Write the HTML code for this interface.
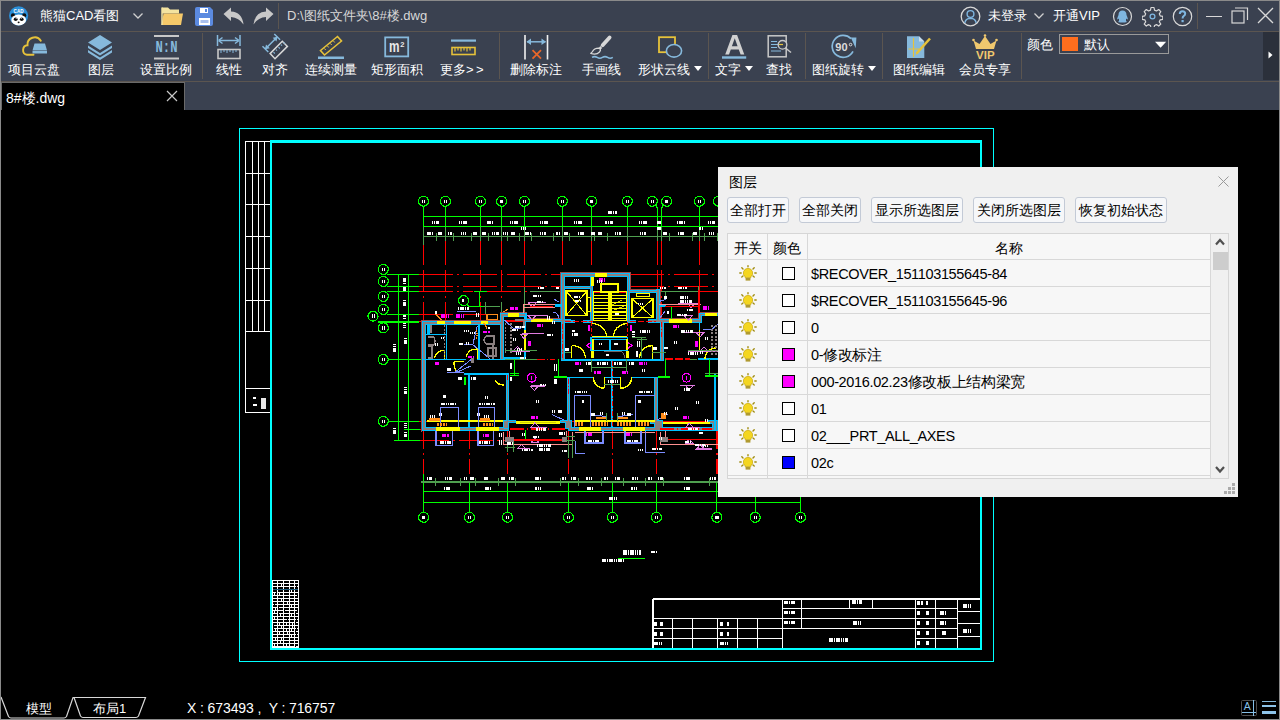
<!DOCTYPE html>
<html><head><meta charset="utf-8">
<style>
*{margin:0;padding:0;box-sizing:border-box}
html,body{width:1280px;height:720px;overflow:hidden;background:#000}
body{position:relative;font-family:"Liberation Sans",sans-serif;color:#fff}
.a{position:absolute}
#title{left:0;top:0;width:1280px;height:32px;background:#3a4150;border-top:1px solid #8a8a8a}
#tb{left:0;top:31px;width:1280px;height:50px;background:#3a4150;border-top:1px solid #5b5550}
#tabbar{left:0;top:81px;width:1280px;height:29px;background:#3a4150;border-top:1px solid #5b5550}
.lbl{position:absolute;top:61px;font-size:13px;line-height:18px;white-space:nowrap;color:#fff}
.sep{position:absolute;top:33px;width:1px;height:46px;background:#5b5550}
.tsep{position:absolute;top:3px;width:1px;height:26px;background:#5b5550}
.tri{position:absolute;width:0;height:0;border-left:4px solid transparent;border-right:4px solid transparent;border-top:5px solid #fff}
#dlg{left:718px;top:167px;width:520px;height:330px;background:#f0f0f0;color:#000;font-size:14px}
.btn{position:absolute;top:30px;height:26px;border:1px solid #c3cad6;border-radius:3px;background:#f6f7f9;font-size:14px;line-height:24px;text-align:center;color:#000}
.row{position:absolute;left:0;width:483px;height:27px;border-bottom:1px solid #d8d8d8}
.cell{position:absolute;top:0;height:27px}
.sq{position:absolute;left:54px;top:7px;width:13px;height:13px;border:1px solid #000;background:#fff}
.nm{position:absolute;left:83px;top:1px;line-height:27px;font-size:14.5px;letter-spacing:-0.35px;color:#000;white-space:nowrap}
</style></head><body>
<!-- TITLE BAR -->
<div id="title" class="a"></div>
<div id="tb" class="a"></div>
<div id="tabbar" class="a"></div>
<!-- title content -->
<svg class="a" style="left:8px;top:5px" width="22" height="22" viewBox="0 0 22 22">
 <circle cx="10.6" cy="10.8" r="9.6" fill="#2c8fd8"/>
 <circle cx="5" cy="10.4" r="2.1" fill="#111"/><circle cx="16.2" cy="10.4" r="2.1" fill="#111"/>
 <ellipse cx="10.7" cy="15" rx="7.4" ry="5.4" fill="#fff"/>
 <ellipse cx="7.7" cy="14.2" rx="1.9" ry="1.8" fill="#111"/>
 <ellipse cx="13.7" cy="14.2" rx="1.9" ry="1.8" fill="#111"/>
 <circle cx="8.2" cy="13.6" r="0.5" fill="#fff"/><circle cx="13.2" cy="13.6" r="0.5" fill="#fff"/>
 <ellipse cx="10.6" cy="17.3" rx="1" ry="0.9" fill="#111"/>
 <text x="10.6" y="7.8" font-size="5" font-weight="bold" fill="#fff" text-anchor="middle" font-family="Liberation Sans" textLength="10" lengthAdjust="spacingAndGlyphs">CAD</text>
</svg>
<div class="a" style="left:40px;top:7px;font-size:13px;line-height:18px;color:#fff">熊猫CAD看图</div>
<svg class="a" style="left:132px;top:12px" width="12" height="8"><path d="M1.5 1.5 L6 6 L10.5 1.5" stroke="#d0d0d0" stroke-width="1.3" fill="none"/></svg>
<svg class="a" style="left:160px;top:6px" width="24" height="20" viewBox="0 0 24 20">
 <path d="M2 1.5 h6 l2 2 h9 v4 h-17z" fill="#f3e3a0"/>
 <path d="M1.5 19 L3.5 7.5 H23 L21 19 Z" fill="#f5c96a"/>
 <path d="M2 1.5 V19" stroke="#f3e3a0" stroke-width="1.5"/>
</svg>
<svg class="a" style="left:195px;top:7px" width="19" height="19" viewBox="0 0 19 19">
 <path d="M0 2 Q0 0 2 0 H15 L18 3 V17 Q18 19 16 19 H2 Q0 19 0 17Z" fill="#5b8ae0"/>
 <rect x="5" y="1" width="8" height="5" fill="#fff"/><rect x="10" y="2" width="2" height="3" fill="#5b8ae0"/>
 <rect x="4" y="11" width="11" height="7" fill="#fff"/><rect x="5.5" y="13" width="8" height="3" fill="#a9c0ee"/>
</svg>
<svg class="a" style="left:223px;top:7px" width="22" height="18" viewBox="0 0 22 18">
 <path d="M0.5 7 L8 0.5 V4.5 Q19 5 20.5 17.5 Q16 10.5 8 10 V14 Z" fill="#c8c8c8"/>
</svg>
<svg class="a" style="left:252px;top:7px" width="22" height="18" viewBox="0 0 22 18">
 <path d="M21.5 7 L14 0.5 V4.5 Q3 5 1.5 17.5 Q6 10.5 14 10 V14 Z" fill="#c8c8c8"/>
</svg>
<div class="tsep" style="left:278px"></div>
<div class="a" style="left:287px;top:7px;font-size:13px;line-height:18px;color:#d8d8d8">D:\图纸文件夹\8#楼.dwg</div>

<svg class="a" style="left:960px;top:6px" width="21" height="21" viewBox="0 0 21 21">
 <circle cx="10.5" cy="10.5" r="9.3" stroke="#d8d8d8" stroke-width="1.3" fill="none"/>
 <circle cx="10.5" cy="8" r="3.4" stroke="#7fb6e0" stroke-width="1.4" fill="none"/>
 <path d="M4.8 17 Q5.5 12.5 10.5 12.3 Q15.5 12.5 16.2 17" stroke="#7fb6e0" stroke-width="1.4" fill="none"/>
</svg>
<div class="a" style="left:988px;top:7px;font-size:13px;line-height:18px">未登录</div>
<svg class="a" style="left:1033px;top:12px" width="12" height="8"><path d="M1.5 1.5 L6 6 L10.5 1.5" stroke="#d0d0d0" stroke-width="1.3" fill="none"/></svg>
<div class="a" style="left:1053px;top:7px;font-size:13px;line-height:18px">开通VIP</div>
<svg class="a" style="left:1112px;top:6px" width="21" height="21" viewBox="0 0 21 21">
 <circle cx="10.5" cy="10.5" r="9" stroke="#d8d8d8" stroke-width="1.2" fill="none"/>
 <path d="M10.5 4.5 Q14.5 4.5 14.5 9 Q15.5 11 16 13.5 Q14.5 13 14 12.5 Q13.5 15 15 16 Q10.5 17 6 16 Q7.5 15 7 12.5 Q6.5 13 5 13.5 Q5.5 11 6.5 9 Q6.5 4.5 10.5 4.5Z" fill="#7fb6e0"/>
</svg>
<svg class="a" style="left:1142px;top:6px" width="21" height="21" viewBox="0 0 21 21">
 <path d="M9 1.5 h3 l0.5 2.6 l2 0.9 l2.2-1.5 l2.1 2.1 l-1.5 2.2 l0.9 2 l2.6 0.5 v3 l-2.6 0.5 l-0.9 2 l1.5 2.2 l-2.1 2.1 l-2.2-1.5 l-2 0.9 l-0.5 2.6 h-3 l-0.5-2.6 l-2-0.9 l-2.2 1.5 l-2.1-2.1 l1.5-2.2 l-0.9-2 l-2.6-0.5 v-3 l2.6-0.5 l0.9-2 l-1.5-2.2 l2.1-2.1 l2.2 1.5 l2-0.9z" stroke="#d8d8d8" stroke-width="1.2" fill="none" stroke-linejoin="round"/>
 <circle cx="10.5" cy="10.5" r="2.4" stroke="#7fb6e0" stroke-width="1.3" fill="none"/>
</svg>
<svg class="a" style="left:1172px;top:6px" width="21" height="21" viewBox="0 0 21 21">
 <circle cx="10.5" cy="10.5" r="9.2" stroke="#d8d8d8" stroke-width="1.2" fill="none"/>
 <path d="M7.8 8 Q7.8 5.3 10.5 5.3 Q13.2 5.3 13.2 7.8 Q13.2 9.3 11.6 10.2 Q10.6 10.8 10.6 12.5" stroke="#7fb6e0" stroke-width="2" fill="none"/>
 <rect x="9.5" y="14" width="2.2" height="2.2" fill="#7fb6e0"/>
</svg>
<div class="tsep" style="left:1197px"></div>
<div class="a" style="left:1206px;top:16px;width:16px;height:1px;background:#d8d8d8"></div>
<svg class="a" style="left:1231px;top:7px" width="18" height="17" viewBox="0 0 18 17">
 <rect x="1" y="4" width="12" height="12" stroke="#d8d8d8" stroke-width="1.2" fill="none"/>
 <path d="M4 1 H16.5 V13" stroke="#d8d8d8" stroke-width="1.2" fill="none"/>
</svg>
<svg class="a" style="left:1257px;top:7px" width="17" height="17" viewBox="0 0 17 17">
 <path d="M1 1 L16 16 M16 1 L1 16" stroke="#d8d8d8" stroke-width="1.3"/>
</svg>

<!-- TOOLBAR -->
<svg class="a" style="left:0;top:31px" width="1280" height="50" viewBox="0 31 1280 50">
 <!-- cloud disk -->
 <path d="M33.5 54.8 H27 A4.8 4.8 0 0 1 27.5 45.3 A7.2 7.2 0 0 1 40.8 40.8" stroke="#e6c23a" stroke-width="1.9" fill="none" stroke-linecap="round"/>
 <path d="M34.5 43.5 H45 L47 50.5 H32.5Z" fill="#86b9dc"/>
 <rect x="32.5" y="51" width="14.5" height="2.5" fill="#86b9dc"/>
 <!-- layers -->
 <path d="M100 35 L112 42.5 L100 50 L88 42.5Z" fill="#86b9dc"/>
 <path d="M88 45.5 L100 53 L112 45.5 L112 48 L100 55.5 L88 48Z" fill="#86b9dc"/>
 <path d="M88 50 L100 57.5 L112 50 L112 52.5 L100 60 L88 52.5Z" fill="#86b9dc"/>
 <!-- N:N -->
 <rect x="154" y="35" width="25" height="2" fill="#c8c8c8"/>
 <rect x="154" y="57.5" width="25" height="2" fill="#c8c8c8"/>
 <text x="166.5" y="52.2" font-family="Liberation Mono" font-size="16" font-weight="bold" fill="#86b9dc" text-anchor="middle" textLength="22" lengthAdjust="spacingAndGlyphs">N:N</text>
 <!-- linear -->
 <path d="M217.5 35 V46 M240 35 V46 M219 40.5 H238.5" stroke="#86b9dc" stroke-width="1.5" fill="none"/>
 <path d="M218.5 40.5 L222.5 37.5 M218.5 40.5 L222.5 43.5 M239 40.5 L235 37.5 M239 40.5 L235 43.5" stroke="#86b9dc" stroke-width="1.5" fill="none"/>
 <rect x="218" y="49.5" width="22" height="9" stroke="#c8c8c8" stroke-width="1.6" fill="none"/>
 <path d="M221 50 v3 M224 50 v2 M227 50 v3 M230 50 v2 M233 50 v3 M236 50 v2" stroke="#86b9dc" stroke-width="1"/>
 <!-- align -->
 <path d="M265.5 48.8 L277 37.2 M262.5 46.2 L268.3 52 M274.3 34 L280.1 39.8" stroke="#86b9dc" stroke-width="1.5" fill="none"/>
 <path d="M265 49.3 L266 44.5 L269.8 48.3Z M277.5 36.7 L276.5 41.5 L272.7 37.7Z" fill="#86b9dc"/>
 <path d="M270.1 53.6 L282.3 41.3 L287.4 46.4 L275 58.7 Z" stroke="#d8d8d8" stroke-width="1.5" fill="none"/>
 <path d="M273.5 52.2 l1.3 1.3 M276 49.7 l1 1 M278.5 47.2 l1.3 1.3 M281 44.7 l1 1 M283.5 42.4 l1.3 1.3" stroke="#86b9dc" stroke-width="1.1"/>
 <!-- continuous measure -->
 <path d="M320.5 50.5 L337.5 36.5 L341.5 41 L324.5 55Z" stroke="#e6c23a" stroke-width="1.6" fill="none"/>
 <path d="M324.5 48.5 l1.2 1.5 M327.5 46 l1.2 1.5 M330.5 43.5 l1.2 1.5 M333.5 41 l1.2 1.5" stroke="#e6c23a" stroke-width="1"/>
 <rect x="318" y="56.5" width="26" height="2.5" fill="#86b9dc"/>
 <!-- area -->
 <rect x="385.2" y="37.4" width="23" height="19" stroke="#86b9dc" stroke-width="1.8" fill="none"/>
 <text x="389" y="52" font-family="Liberation Sans" font-size="16" font-weight="bold" fill="#e8e8e8" textLength="10.5" lengthAdjust="spacingAndGlyphs">m</text>
 <text x="402.3" y="46.5" font-family="Liberation Sans" font-size="7.5" font-weight="bold" fill="#e8e8e8" text-anchor="middle">2</text>
 <!-- more -->
 <rect x="451" y="39.5" width="25" height="2.2" fill="#86b9dc"/>
 <rect x="452" y="47.5" width="23" height="7" stroke="#e6c23a" stroke-width="1.6" fill="none"/>
 <path d="M455 48 v3.5 M458 48 v2.5 M461 48 v3.5 M464 48 v2.5 M467 48 v3.5 M470 48 v2.5" stroke="#e6c23a" stroke-width="1.2"/>
 <!-- delete dim -->
 <path d="M525 35 V59.5 M547.5 35 V59.5" stroke="#f0f0f0" stroke-width="1.6"/>
 <path d="M527 41.8 H545.5" stroke="#86b9dc" stroke-width="1.5"/>
 <path d="M526.5 41.8 L531 38.5 V45Z M546 41.8 L541.5 38.5 V45Z" fill="#86b9dc"/>
 <path d="M532.5 50.2 L541 58.6 M541 50.2 L532.5 58.6" stroke="#e8662a" stroke-width="1.8"/>
 <!-- freehand -->
 <path d="M602.6 45.2 L609.6 37.4" stroke="#d8d8d8" stroke-width="3.8" stroke-linecap="round"/>
 <path d="M599.5 47 L601.3 48.8" stroke="#d8d8d8" stroke-width="2.6"/>
 <path d="M598.8 48.2 Q594 48.5 592.5 51.5 Q591.5 53 590.8 53.4 Q596.5 55.2 599.5 52 Q601 50.3 600.2 49Z" stroke="#d8d8d8" stroke-width="1.3" fill="none" stroke-linejoin="round"/>
 <path d="M592 57.4 q2.6 -1.6 5.2 0 t5.2 0 t5.2 0 t5.2 0" stroke="#86b9dc" stroke-width="1.6" fill="none"/>
 <!-- shape cloud -->
 <rect x="659" y="37.2" width="16" height="15" stroke="#e6c23a" stroke-width="1.8" fill="none"/>
 <ellipse cx="674" cy="50.8" rx="7.6" ry="6.3" stroke="#86b9dc" stroke-width="1.6" fill="#3a4150"/>
 <!-- text A -->
 <path d="M725.2 54.6 L732.4 35 H737.1 L744.3 54.6 H740.6 L738.8 49.4 H730.8 L729 54.6 Z M731.9 46.2 H737.6 L734.75 38.2 Z" fill="#d0d0d0" fill-rule="evenodd"/>
 <rect x="722" y="56.3" width="24.2" height="2.4" fill="#86b9dc"/>
 <!-- find -->
 <rect x="768.2" y="35.8" width="18" height="21" stroke="#c8c8c8" stroke-width="1.5" fill="#3a4150"/>
 <path d="M771 41.5 h6 M771 44.5 h8 M771 47.5 h6 M771 51 h10" stroke="#86b9dc" stroke-width="1"/>
 <circle cx="782.5" cy="44.8" r="4.3" stroke="#c8c8c8" stroke-width="1.4" fill="#3a4150"/>
 <path d="M779 44.5 h4" stroke="#e6c23a" stroke-width="1.2"/>
 <path d="M785.5 48 L791 52.5" stroke="#c8c8c8" stroke-width="1.5"/>
 <!-- rotate 90 -->
 <path d="M853 51.4 A11 11 0 1 1 851 38.6" stroke="#86b9dc" stroke-width="1.7" fill="none"/>
 <path d="M850.8 37.4 L856.4 37.4 L855.7 48.3 Z" fill="#86b9dc"/>
 <text x="835.3" y="51" font-family="Liberation Sans" font-size="11" font-weight="bold" fill="#dcdcdc" textLength="12.3" lengthAdjust="spacingAndGlyphs">90</text>
 <circle cx="850.6" cy="44.6" r="1.3" stroke="#dcdcdc" stroke-width="1" fill="none"/>
 <!-- edit drawing -->
 <path d="M907 36.3 H919 L924.3 41.5 V58.1 H907Z" fill="#86b9dc"/>
 <path d="M919 36.3 V41.5 H924.3" fill="#c8dcea"/>
 <path d="M913.5 38 V57 M908.5 49 H919" stroke="#e6c23a" stroke-width="1.2"/>
 <path d="M916.5 53.5 L930 38.5" stroke="#e6c23a" stroke-width="2.6"/>
 <path d="M915.5 55 L916.8 52 L918.3 53.4Z" fill="#e6c23a"/>
 <!-- vip -->
 <path d="M973.5 40.5 L979.5 44 L985 36 L990.5 44 L996.5 40.5 L994 49 H976Z" fill="#f0c86e"/>
 <circle cx="973.5" cy="40" r="1.3" fill="#f0c86e"/><circle cx="996.5" cy="40" r="1.3" fill="#f0c86e"/><circle cx="985" cy="35.5" r="1.3" fill="#f0c86e"/>
 <text x="985.3" y="59" font-family="Liberation Sans" font-size="11.5" font-weight="bold" fill="#f0c86e" text-anchor="middle">VIP</text>
 <!-- color box -->
 <rect x="1059.5" y="34.5" width="109" height="19" stroke="#9a9a9a" stroke-width="1" fill="none"/>
 <rect x="1062" y="37" width="16" height="14" fill="#ff6e1e"/>
 <path d="M1155 41.7 H1166.2 L1160.6 47.8Z" fill="#fff"/>
 <!-- right strip -->
 <rect x="1263" y="32" width="16" height="48" fill="#2b303b"/>
 <path d="M1268.5 51.5 L1272.5 55 L1268.5 58.5Z" fill="#fff"/>
</svg>
<div class="lbl" style="left:8px">项目云盘</div>
<div class="lbl" style="left:88px">图层</div>
<div class="lbl" style="left:140px">设置比例</div>
<div class="sep" style="left:202px"></div>
<div class="lbl" style="left:216px">线性</div>
<div class="lbl" style="left:262px">对齐</div>
<div class="lbl" style="left:305px">连续测量</div>
<div class="lbl" style="left:371px">矩形面积</div>
<div class="lbl" style="left:440px">更多<span style="letter-spacing:2.5px">&gt;&gt;</span></div>
<div class="sep" style="left:499px"></div>
<div class="lbl" style="left:510px">删除标注</div>
<div class="lbl" style="left:582px">手画线</div>
<div class="lbl" style="left:638px">形状云线</div>
<div class="tri" style="left:694px;top:66px"></div>
<div class="sep" style="left:708px"></div>
<div class="lbl" style="left:715px">文字</div>
<div class="tri" style="left:745px;top:66px"></div>
<div class="lbl" style="left:766px">查找</div>
<div class="sep" style="left:805px"></div>
<div class="lbl" style="left:812px">图纸旋转</div>
<div class="tri" style="left:868px;top:66px"></div>
<div class="sep" style="left:882px"></div>
<div class="lbl" style="left:893px">图纸编辑</div>
<div class="lbl" style="left:959px">会员专享</div>
<div class="sep" style="left:1021px"></div>
<div class="a" style="left:1027px;top:36px;font-size:13px;line-height:18px">颜色</div>
<div class="a" style="left:1084px;top:36px;font-size:13px;line-height:18px">默认</div>
<!-- TAB -->
<div class="a" style="left:1px;top:82px;width:184px;height:28px;background:#000;border-right:1px solid #6a6a6a;border-top:1px solid #6a6a6a;border-left:1px solid #6a6a6a"></div>
<div class="a" style="left:6px;top:89px;font-size:14px;line-height:18px;color:#fff">8#楼.dwg</div>
<svg class="a" style="left:166px;top:90px" width="12" height="12"><path d="M1 1 L11 11 M11 1 L1 11" stroke="#c8c8c8" stroke-width="1.2"/></svg>

<!-- DRAWING -->
<svg id="dwg" class="a" style="left:0;top:110px" width="1280" height="610" viewBox="0 110 1280 610" shape-rendering="crispEdges">
<g id="frames" fill="none" stroke="#00ffff">
 <rect x="239.5" y="128.5" width="754" height="533" stroke-width="1"/>
 <path d="M271 143 V649 M981 141 V649 M270 141.5 H982 M270 649 H982" stroke-width="2"/>
 <path d="M270 141.5 H982" stroke-width="3"/>
</g>
<!--DWG-->
<line x1="423.5" y1="240.8" x2="423.5" y2="264.7" stroke="#ff0000" stroke-width="1.5" />
<line x1="445.4" y1="240.8" x2="445.4" y2="264.7" stroke="#ff0000" stroke-width="1.5" />
<line x1="480.4" y1="240.8" x2="480.4" y2="264.7" stroke="#ff0000" stroke-width="1.5" />
<line x1="501.6" y1="240.8" x2="501.6" y2="264.7" stroke="#ff0000" stroke-width="1.5" />
<line x1="524.4" y1="240.8" x2="524.4" y2="264.7" stroke="#ff0000" stroke-width="1.5" />
<line x1="562.3" y1="240.8" x2="562.3" y2="264.7" stroke="#ff0000" stroke-width="1.5" />
<line x1="591.6" y1="240.8" x2="591.6" y2="264.7" stroke="#ff0000" stroke-width="1.5" />
<line x1="627.3" y1="240.8" x2="627.3" y2="264.7" stroke="#ff0000" stroke-width="1.5" />
<line x1="657.5" y1="240.8" x2="657.5" y2="264.7" stroke="#ff0000" stroke-width="1.5" />
<line x1="661.5" y1="240.8" x2="661.5" y2="264.7" stroke="#ff0000" stroke-width="1.5" />
<line x1="699.4" y1="240.8" x2="699.4" y2="264.7" stroke="#ff0000" stroke-width="1.5" />
<line x1="423.6" y1="431" x2="423.6" y2="474" stroke="#ff0000" stroke-width="1.5" stroke-dasharray="18 4 2 4"/>
<line x1="469.4" y1="431" x2="469.4" y2="474" stroke="#ff0000" stroke-width="1.5" stroke-dasharray="18 4 2 4"/>
<line x1="507.5" y1="431" x2="507.5" y2="474" stroke="#ff0000" stroke-width="1.5" stroke-dasharray="18 4 2 4"/>
<line x1="568.4" y1="431" x2="568.4" y2="474" stroke="#ff0000" stroke-width="1.5" stroke-dasharray="18 4 2 4"/>
<line x1="612.4" y1="431" x2="612.4" y2="474" stroke="#ff0000" stroke-width="1.5" stroke-dasharray="18 4 2 4"/>
<line x1="656.4" y1="431" x2="656.4" y2="474" stroke="#ff0000" stroke-width="1.5" stroke-dasharray="18 4 2 4"/>
<line x1="716.8" y1="431" x2="716.8" y2="474" stroke="#ff0000" stroke-width="1.5" stroke-dasharray="18 4 2 4"/>
<line x1="423.5" y1="270.3" x2="423.5" y2="321" stroke="#ff0000" stroke-width="1.5" stroke-dasharray="22 4 1.5 4"/>
<line x1="445.4" y1="270.3" x2="445.4" y2="321" stroke="#ff0000" stroke-width="1.5" stroke-dasharray="22 4 1.5 4"/>
<line x1="480.4" y1="270.3" x2="480.4" y2="321" stroke="#ff0000" stroke-width="1.5" stroke-dasharray="22 4 1.5 4"/>
<line x1="501.6" y1="270.3" x2="501.6" y2="321" stroke="#ff0000" stroke-width="1.5" stroke-dasharray="22 4 1.5 4"/>
<line x1="524.4" y1="270.3" x2="524.4" y2="321" stroke="#ff0000" stroke-width="1.5" stroke-dasharray="22 4 1.5 4"/>
<line x1="657.5" y1="270.3" x2="657.5" y2="318" stroke="#ff0000" stroke-width="1.5" stroke-dasharray="22 4 1.5 4"/>
<line x1="661.5" y1="270.3" x2="661.5" y2="318" stroke="#ff0000" stroke-width="1.5" stroke-dasharray="22 4 1.5 4"/>
<line x1="699.4" y1="270.3" x2="699.4" y2="318" stroke="#ff0000" stroke-width="1.5" stroke-dasharray="22 4 1.5 4"/>
<line x1="419" y1="274.5" x2="560" y2="274.5" stroke="#ff0000" stroke-width="1.5" stroke-dasharray="34 4 2 4"/>
<line x1="630" y1="274.5" x2="718" y2="274.5" stroke="#ff0000" stroke-width="1.5" stroke-dasharray="34 4 2 4"/>
<line x1="419" y1="286.5" x2="560" y2="286.5" stroke="#ff0000" stroke-width="1.5" stroke-dasharray="34 4 2 4"/>
<line x1="630" y1="286.5" x2="718" y2="286.5" stroke="#ff0000" stroke-width="1.5" stroke-dasharray="34 4 2 4"/>
<line x1="419" y1="291.5" x2="473" y2="291.5" stroke="#ff0000" stroke-width="1.5" stroke-dasharray="34 4 2 4"/>
<line x1="487" y1="291.5" x2="530" y2="291.5" stroke="#ff0000" stroke-width="1.5" stroke-dasharray="34 4 2 4"/>
<line x1="700" y1="291.5" x2="718" y2="291.5" stroke="#ff0000" stroke-width="1.5" stroke-dasharray="34 4 2 4"/>
<line x1="530" y1="291.3" x2="560" y2="291.3" stroke="#4f9f4f" stroke-width="1.2" />
<line x1="657.5" y1="291.3" x2="698.75" y2="291.3" stroke="#4f9f4f" stroke-width="1.2" />
<line x1="665.6" y1="291" x2="665.6" y2="296" stroke="#4f9f4f" stroke-width="1" />
<line x1="698.75" y1="286" x2="698.75" y2="318" stroke="#4f9f4f" stroke-width="1" />
<line x1="419" y1="321.7" x2="421" y2="321.7" stroke="#ff0000" stroke-width="1.5" />
<line x1="419" y1="314.4" x2="500" y2="314.4" stroke="#ff0000" stroke-width="1.5" stroke-dasharray="34 4 2 4"/>
<line x1="419" y1="359.5" x2="423" y2="359.5" stroke="#ff0000" stroke-width="1.5" />
<line x1="419" y1="421.3" x2="718" y2="421.3" stroke="#ff0000" stroke-width="1.2" />
<line x1="419" y1="429.5" x2="425" y2="429.5" stroke="#ff0000" stroke-width="1.5" />
<line x1="415" y1="440.5" x2="505" y2="440.5" stroke="#ff0000" stroke-width="1.5" stroke-dasharray="34 4 2 4"/>
<circle cx="423.5" cy="201.3" r="5" stroke="#00ff00" stroke-width="1.2" fill="none"/>
<line x1="423.5" y1="206.3" x2="423.5" y2="226.6" stroke="#00ff00" stroke-width="1.2" />
<line x1="423.5" y1="226.6" x2="423.5" y2="240.8" stroke="#4f9f4f" stroke-width="1.2" />
<circle cx="445.4" cy="201.3" r="5" stroke="#00ff00" stroke-width="1.2" fill="none"/>
<line x1="445.4" y1="206.3" x2="445.4" y2="226.6" stroke="#00ff00" stroke-width="1.2" />
<line x1="445.4" y1="226.6" x2="445.4" y2="240.8" stroke="#4f9f4f" stroke-width="1.2" />
<circle cx="480.4" cy="201.3" r="5" stroke="#00ff00" stroke-width="1.2" fill="none"/>
<line x1="480.4" y1="206.3" x2="480.4" y2="226.6" stroke="#00ff00" stroke-width="1.2" />
<line x1="480.4" y1="226.6" x2="480.4" y2="240.8" stroke="#4f9f4f" stroke-width="1.2" />
<circle cx="501.6" cy="201.3" r="5" stroke="#00ff00" stroke-width="1.2" fill="none"/>
<line x1="501.6" y1="206.3" x2="501.6" y2="226.6" stroke="#00ff00" stroke-width="1.2" />
<line x1="501.6" y1="226.6" x2="501.6" y2="240.8" stroke="#4f9f4f" stroke-width="1.2" />
<circle cx="524.4" cy="201.3" r="5" stroke="#00ff00" stroke-width="1.2" fill="none"/>
<line x1="524.4" y1="206.3" x2="524.4" y2="226.6" stroke="#00ff00" stroke-width="1.2" />
<line x1="524.4" y1="226.6" x2="524.4" y2="240.8" stroke="#4f9f4f" stroke-width="1.2" />
<circle cx="562.3" cy="201.3" r="5" stroke="#00ff00" stroke-width="1.2" fill="none"/>
<line x1="562.3" y1="206.3" x2="562.3" y2="226.6" stroke="#00ff00" stroke-width="1.2" />
<line x1="562.3" y1="226.6" x2="562.3" y2="240.8" stroke="#4f9f4f" stroke-width="1.2" />
<circle cx="591.6" cy="201.3" r="5" stroke="#00ff00" stroke-width="1.2" fill="none"/>
<line x1="591.6" y1="206.3" x2="591.6" y2="226.6" stroke="#00ff00" stroke-width="1.2" />
<line x1="591.6" y1="226.6" x2="591.6" y2="240.8" stroke="#4f9f4f" stroke-width="1.2" />
<circle cx="627.3" cy="201.3" r="5" stroke="#00ff00" stroke-width="1.2" fill="none"/>
<line x1="627.3" y1="206.3" x2="627.3" y2="226.6" stroke="#00ff00" stroke-width="1.2" />
<line x1="627.3" y1="226.6" x2="627.3" y2="240.8" stroke="#4f9f4f" stroke-width="1.2" />
<circle cx="652.3" cy="201.3" r="5" stroke="#00ff00" stroke-width="1.2" fill="none"/>
<circle cx="666.6" cy="201.3" r="5" stroke="#00ff00" stroke-width="1.2" fill="none"/>
<circle cx="699.4" cy="201.3" r="5" stroke="#00ff00" stroke-width="1.2" fill="none"/>
<path d="M655.5 205 L657.5 208 V226.6" stroke="#00ff00" stroke-width="1.2" fill="none" />
<path d="M663.5 205 L661.5 208 V226.6" stroke="#00ff00" stroke-width="1.2" fill="none" />
<line x1="657.5" y1="226.6" x2="657.5" y2="240.8" stroke="#4f9f4f" stroke-width="1.2" />
<line x1="661.5" y1="226.6" x2="661.5" y2="240.8" stroke="#4f9f4f" stroke-width="1.2" />
<line x1="699.4" y1="206.3" x2="699.4" y2="226.6" stroke="#00ff00" stroke-width="1.2" />
<line x1="699.4" y1="226.6" x2="699.4" y2="240.8" stroke="#4f9f4f" stroke-width="1.2" />
<circle cx="718.5" cy="201.3" r="5" stroke="#00ff00" stroke-width="1.2" fill="none"/>
<line x1="423.5" y1="216.5" x2="718" y2="216.5" stroke="#00ff00" stroke-width="1.2" />
<line x1="423.5" y1="226.6" x2="718" y2="226.6" stroke="#00ff00" stroke-width="1.2" />
<line x1="423.5" y1="236.5" x2="718" y2="236.5" stroke="#4f9f4f" stroke-width="1.2" />
<line x1="423.5" y1="226.6" x2="423.5" y2="245" stroke="#4f9f4f" stroke-width="1.2" />
<line x1="423.5" y1="245" x2="423.5" y2="264.7" stroke="#ff0000" stroke-width="1.5" />
<line x1="436.5" y1="232.5" x2="436.5" y2="240.5" stroke="#4f9f4f" stroke-width="1" />
<line x1="453.4" y1="232.5" x2="453.4" y2="240.5" stroke="#4f9f4f" stroke-width="1" />
<line x1="471.25" y1="232.5" x2="471.25" y2="240.5" stroke="#4f9f4f" stroke-width="1" />
<line x1="488.5" y1="232.5" x2="488.5" y2="240.5" stroke="#4f9f4f" stroke-width="1" />
<line x1="507.25" y1="232.5" x2="507.25" y2="240.5" stroke="#4f9f4f" stroke-width="1" />
<line x1="519.4" y1="232.5" x2="519.4" y2="240.5" stroke="#4f9f4f" stroke-width="1" />
<line x1="531.25" y1="232.5" x2="531.25" y2="240.5" stroke="#4f9f4f" stroke-width="1" />
<line x1="553.4" y1="232.5" x2="553.4" y2="240.5" stroke="#4f9f4f" stroke-width="1" />
<line x1="569.4" y1="232.5" x2="569.4" y2="240.5" stroke="#4f9f4f" stroke-width="1" />
<line x1="594.4" y1="232.5" x2="594.4" y2="240.5" stroke="#4f9f4f" stroke-width="1" />
<line x1="607.5" y1="232.5" x2="607.5" y2="240.5" stroke="#4f9f4f" stroke-width="1" />
<line x1="669.75" y1="232.5" x2="669.75" y2="240.5" stroke="#4f9f4f" stroke-width="1" />
<line x1="692.5" y1="232.5" x2="692.5" y2="240.5" stroke="#4f9f4f" stroke-width="1" />
<line x1="704.4" y1="232.5" x2="704.4" y2="240.5" stroke="#4f9f4f" stroke-width="1" />
<line x1="717" y1="232.5" x2="717" y2="240.5" stroke="#4f9f4f" stroke-width="1" />
<circle cx="423.6" cy="517.3" r="5" stroke="#00ff00" stroke-width="1.2" fill="none"/>
<line x1="423.6" y1="481" x2="423.6" y2="512.3" stroke="#00ff00" stroke-width="1.2" />
<circle cx="469.4" cy="517.3" r="5" stroke="#00ff00" stroke-width="1.2" fill="none"/>
<line x1="469.4" y1="481" x2="469.4" y2="512.3" stroke="#00ff00" stroke-width="1.2" />
<circle cx="507.5" cy="517.3" r="5" stroke="#00ff00" stroke-width="1.2" fill="none"/>
<line x1="507.5" y1="481" x2="507.5" y2="512.3" stroke="#00ff00" stroke-width="1.2" />
<circle cx="568.4" cy="517.3" r="5" stroke="#00ff00" stroke-width="1.2" fill="none"/>
<line x1="568.4" y1="481" x2="568.4" y2="512.3" stroke="#00ff00" stroke-width="1.2" />
<circle cx="612.4" cy="517.3" r="5" stroke="#00ff00" stroke-width="1.2" fill="none"/>
<line x1="612.4" y1="481" x2="612.4" y2="512.3" stroke="#00ff00" stroke-width="1.2" />
<circle cx="656.4" cy="517.3" r="5" stroke="#00ff00" stroke-width="1.2" fill="none"/>
<line x1="656.4" y1="481" x2="656.4" y2="512.3" stroke="#00ff00" stroke-width="1.2" />
<circle cx="716.8" cy="517.3" r="5" stroke="#00ff00" stroke-width="1.2" fill="none"/>
<line x1="716.8" y1="481" x2="716.8" y2="512.3" stroke="#00ff00" stroke-width="1.2" />
<line x1="423.6" y1="474" x2="423.6" y2="512" stroke="#00ff00" stroke-width="1.2" />
<circle cx="755.2" cy="517.3" r="5" stroke="#00ff00" stroke-width="1.2" fill="none"/>
<circle cx="800.5" cy="517.3" r="5" stroke="#00ff00" stroke-width="1.2" fill="none"/>
<line x1="423.6" y1="491.7" x2="718" y2="491.7" stroke="#00ff00" stroke-width="1.2" />
<line x1="423.6" y1="502.2" x2="800.5" y2="502.2" stroke="#00ff00" stroke-width="1.2" />
<line x1="755.2" y1="496" x2="755.2" y2="512" stroke="#00ff00" stroke-width="1.2" />
<line x1="800.5" y1="496" x2="800.5" y2="512" stroke="#00ff00" stroke-width="1.2" />
<line x1="421" y1="481.9" x2="718" y2="481.9" stroke="#4f9f4f" stroke-width="1.2" />
<line x1="435.3" y1="477.5" x2="435.3" y2="485.5" stroke="#4f9f4f" stroke-width="1" />
<line x1="460.3" y1="477.5" x2="460.3" y2="485.5" stroke="#4f9f4f" stroke-width="1" />
<line x1="475.3" y1="477.5" x2="475.3" y2="485.5" stroke="#4f9f4f" stroke-width="1" />
<line x1="498.3" y1="477.5" x2="498.3" y2="485.5" stroke="#4f9f4f" stroke-width="1" />
<line x1="515.5" y1="477.5" x2="515.5" y2="485.5" stroke="#4f9f4f" stroke-width="1" />
<line x1="560.3" y1="477.5" x2="560.3" y2="485.5" stroke="#4f9f4f" stroke-width="1" />
<line x1="578.4" y1="477.5" x2="578.4" y2="485.5" stroke="#4f9f4f" stroke-width="1" />
<line x1="601.4" y1="477.5" x2="601.4" y2="485.5" stroke="#4f9f4f" stroke-width="1" />
<line x1="623.2" y1="477.5" x2="623.2" y2="485.5" stroke="#4f9f4f" stroke-width="1" />
<line x1="645.5" y1="477.5" x2="645.5" y2="485.5" stroke="#4f9f4f" stroke-width="1" />
<line x1="663.6" y1="477.5" x2="663.6" y2="485.5" stroke="#4f9f4f" stroke-width="1" />
<line x1="709.1" y1="477.5" x2="709.1" y2="485.5" stroke="#4f9f4f" stroke-width="1" />
<circle cx="383.3" cy="269.4" r="5" stroke="#00ff00" stroke-width="1.2" fill="none"/>
<circle cx="383.3" cy="281.4" r="5" stroke="#00ff00" stroke-width="1.2" fill="none"/>
<circle cx="383.3" cy="296.4" r="5" stroke="#00ff00" stroke-width="1.2" fill="none"/>
<circle cx="383.3" cy="309.4" r="5" stroke="#00ff00" stroke-width="1.2" fill="none"/>
<circle cx="373" cy="316.1" r="5" stroke="#00ff00" stroke-width="1.2" fill="none"/>
<circle cx="383.3" cy="327.8" r="5" stroke="#00ff00" stroke-width="1.2" fill="none"/>
<circle cx="383.3" cy="359.5" r="5" stroke="#00ff00" stroke-width="1.2" fill="none"/>
<circle cx="383.3" cy="421.3" r="5" stroke="#00ff00" stroke-width="1.2" fill="none"/>
<line x1="387" y1="274.7" x2="419" y2="274.7" stroke="#00ff00" stroke-width="1.2" />
<line x1="387" y1="286.4" x2="419" y2="286.4" stroke="#00ff00" stroke-width="1.2" />
<line x1="387" y1="291.3" x2="419" y2="291.3" stroke="#00ff00" stroke-width="1.2" />
<line x1="387" y1="314.4" x2="419" y2="314.4" stroke="#00ff00" stroke-width="1.2" />
<line x1="378" y1="321.7" x2="419" y2="321.7" stroke="#00ff00" stroke-width="2" />
<line x1="388.3" y1="359.5" x2="421" y2="359.5" stroke="#00ff00" stroke-width="1.2" />
<line x1="388.3" y1="421.3" x2="419" y2="421.3" stroke="#00ff00" stroke-width="1.2" />
<line x1="404" y1="429.5" x2="420" y2="429.5" stroke="#00ff00" stroke-width="1.2" />
<line x1="394" y1="440.3" x2="420" y2="440.3" stroke="#00ff00" stroke-width="1.2" />
<line x1="398.7" y1="274.7" x2="398.7" y2="441" stroke="#00ff00" stroke-width="1.2" />
<line x1="408.3" y1="274.7" x2="408.3" y2="441" stroke="#00ff00" stroke-width="1.2" />
<circle cx="463.7" cy="300.6" r="5" stroke="#00ff00" stroke-width="1.2" fill="none"/>
<path d="M467 304.5 L469 306.5 H484" stroke="#00ff00" stroke-width="1.2" fill="none" />
<line x1="474" y1="291.5" x2="487" y2="291.5" stroke="#00ff00" stroke-width="1.2" />
<line x1="479.5" y1="291.5" x2="479.5" y2="306.5" stroke="#00ff00" stroke-width="1.2" />
<line x1="484" y1="306.5" x2="500" y2="306.5" stroke="#4f9f4f" stroke-width="1.2" />
<line x1="485" y1="302" x2="485" y2="314" stroke="#4f9f4f" stroke-width="1" />
<line x1="501.5" y1="302" x2="501.5" y2="314" stroke="#4f9f4f" stroke-width="1" />
<line x1="524.4" y1="286.5" x2="524.4" y2="314" stroke="#4f9f4f" stroke-width="1" />
<path d="M421.5 431.5 V320 H500 V312.5 H526 V318.8 H560.2 V272 H630.5 V289 H660.5 V318.8 H698 V312 H718" stroke="#a04a4a" stroke-width="1" fill="none" />
<rect x="422" y="321" width="4.00" height="110.00" fill="#00bfff"/>
<rect x="422" y="321" width="80.00" height="4.00" fill="#00bfff"/>
<rect x="422" y="427" width="83.00" height="4.00" fill="#00bfff"/>
<rect x="500.3" y="313" width="3.90" height="46.60" fill="#00bfff"/>
<rect x="500.3" y="313" width="25.70" height="4.00" fill="#00bfff"/>
<rect x="524.2" y="313" width="2.30" height="9.20" fill="#00bfff"/>
<rect x="500" y="357.2" width="26.00" height="2.40" fill="#00bfff"/>
<rect x="524" y="319.3" width="47.00" height="2.90" fill="#00bfff"/>
<rect x="560.6" y="272.5" width="4.40" height="88.00" fill="#00bfff"/>
<rect x="560.6" y="272.5" width="69.40" height="4.50" fill="#00bfff"/>
<rect x="626.9" y="272.5" width="3.10" height="20.50" fill="#00bfff"/>
<rect x="626.9" y="290" width="33.10" height="3.00" fill="#00bfff"/>
<rect x="656" y="289.4" width="4.00" height="33.30" fill="#00bfff"/>
<rect x="563.75" y="286" width="29.25" height="3.00" fill="#00bfff"/>
<rect x="590" y="277" width="3.00" height="45.50" fill="#00bfff"/>
<rect x="563.75" y="319.5" width="11.25" height="3.00" fill="#00bfff"/>
<rect x="583" y="319.5" width="10.00" height="3.00" fill="#00bfff"/>
<rect x="626.9" y="290" width="3.10" height="32.50" fill="#00bfff"/>
<rect x="626.9" y="319.5" width="9.10" height="3.00" fill="#00bfff"/>
<rect x="648" y="319.3" width="53.50" height="3.40" fill="#00bfff"/>
<rect x="561" y="358.5" width="102.50" height="2.10" fill="#00bfff"/>
<rect x="659.7" y="319" width="3.80" height="41.50" fill="#00bfff"/>
<rect x="698.5" y="312.5" width="3.00" height="10.20" fill="#00bfff"/>
<rect x="698.5" y="312.5" width="21.50" height="3.50" fill="#00bfff"/>
<rect x="698" y="358.2" width="22.00" height="2.10" fill="#00bfff"/>
<rect x="505.6" y="373.5" width="3.40" height="54.50" fill="#00bfff"/>
<rect x="567.2" y="376.7" width="2.80" height="51.30" fill="#00bfff"/>
<rect x="653.9" y="377" width="4.10" height="54.00" fill="#00bfff"/>
<rect x="568" y="427.2" width="150.00" height="3.90" fill="#00bfff"/>
<rect x="503.3" y="420.3" width="12.70" height="3.00" fill="#00bfff"/>
<rect x="503.3" y="420.3" width="6.10" height="8.60" fill="#00bfff"/>
<rect x="560" y="420.3" width="12.00" height="3.00" fill="#00bfff"/>
<rect x="564.5" y="420.3" width="7.20" height="8.60" fill="#00bfff"/>
<rect x="650" y="420" width="13.00" height="3.50" fill="#00bfff"/>
<rect x="653.9" y="420" width="9.10" height="11.00" fill="#00bfff"/>
<rect x="708" y="420" width="10.00" height="3.50" fill="#00bfff"/>
<rect x="712" y="420" width="6.00" height="11.00" fill="#00bfff"/>
<rect x="498" y="427.6" width="11.00" height="3.00" fill="#00bfff"/>
<rect x="423" y="322" width="2.00" height="108.00" fill="#8a8080"/>
<rect x="423" y="322" width="78.00" height="2.00" fill="#8a8080"/>
<rect x="423" y="428" width="81.00" height="2.00" fill="#8a8080"/>
<rect x="501.3" y="314" width="1.90" height="44.60" fill="#8a8080"/>
<rect x="501.3" y="314" width="23.70" height="2.00" fill="#8a8080"/>
<rect x="525" y="320.3" width="45.00" height="0.90" fill="#8a8080"/>
<rect x="561.6" y="273.5" width="2.40" height="86.00" fill="#8a8080"/>
<rect x="561.6" y="273.5" width="67.40" height="2.50" fill="#8a8080"/>
<rect x="627.9" y="273.5" width="1.10" height="18.50" fill="#8a8080"/>
<rect x="627.9" y="291" width="31.10" height="1.00" fill="#8a8080"/>
<rect x="657" y="290.4" width="2.00" height="31.30" fill="#8a8080"/>
<rect x="564.75" y="287" width="27.25" height="1.00" fill="#8a8080"/>
<rect x="591" y="278" width="1.00" height="43.50" fill="#8a8080"/>
<rect x="564.75" y="320.5" width="9.25" height="1.00" fill="#8a8080"/>
<rect x="584" y="320.5" width="8.00" height="1.00" fill="#8a8080"/>
<rect x="627.9" y="291" width="1.10" height="30.50" fill="#8a8080"/>
<rect x="627.9" y="320.5" width="7.10" height="1.00" fill="#8a8080"/>
<rect x="649" y="320.3" width="51.50" height="1.40" fill="#8a8080"/>
<rect x="660.7" y="320" width="1.80" height="39.50" fill="#8a8080"/>
<rect x="699.5" y="313.5" width="1.00" height="8.20" fill="#8a8080"/>
<rect x="699.5" y="313.5" width="19.50" height="1.50" fill="#8a8080"/>
<rect x="506.6" y="374.5" width="1.40" height="52.50" fill="#8a8080"/>
<rect x="568.2" y="377.7" width="0.80" height="49.30" fill="#8a8080"/>
<rect x="654.9" y="378" width="2.10" height="52.00" fill="#8a8080"/>
<rect x="569" y="428.2" width="148.00" height="1.90" fill="#8a8080"/>
<rect x="504.3" y="421.3" width="10.70" height="1.00" fill="#8a8080"/>
<rect x="504.3" y="421.3" width="4.10" height="6.60" fill="#8a8080"/>
<rect x="561" y="421.3" width="10.00" height="1.00" fill="#8a8080"/>
<rect x="565.5" y="421.3" width="5.20" height="6.60" fill="#8a8080"/>
<rect x="651" y="421" width="11.00" height="1.50" fill="#8a8080"/>
<rect x="654.9" y="421" width="7.10" height="9.00" fill="#8a8080"/>
<rect x="709" y="421" width="8.00" height="1.50" fill="#8a8080"/>
<rect x="713" y="421" width="4.00" height="9.00" fill="#8a8080"/>
<rect x="499" y="428.6" width="9.00" height="1.00" fill="#8a8080"/>
<rect x="445.6" y="324" width="1.60" height="35.50" fill="#00bfff"/>
<rect x="478.2" y="324" width="1.90" height="35.50" fill="#00bfff"/>
<rect x="422" y="358.7" width="43.60" height="1.40" fill="#00bfff"/>
<rect x="477" y="358.7" width="25.00" height="1.40" fill="#00bfff"/>
<rect x="426" y="333.7" width="20.00" height="1.40" fill="#00bfff"/>
<rect x="426.7" y="324" width="2.90" height="10.00" fill="#00bfff"/>
<rect x="464.4" y="372.5" width="44.60" height="2.50" fill="#00bfff"/>
<rect x="468" y="374" width="2.00" height="53.00" fill="#00bfff"/>
<rect x="524" y="322" width="2.00" height="37.50" fill="#00bfff"/>
<rect x="568" y="376.7" width="25.30" height="1.50" fill="#00bfff"/>
<rect x="605" y="376.7" width="6.00" height="1.50" fill="#00bfff"/>
<rect x="613" y="376.7" width="7.00" height="1.50" fill="#00bfff"/>
<rect x="631.7" y="376.7" width="23.30" height="1.50" fill="#00bfff"/>
<rect x="610.6" y="359" width="1.00" height="68.00" fill="#00bfff"/>
<rect x="612.3" y="359" width="1.00" height="68.00" fill="#00bfff"/>
<rect x="714" y="373" width="2.00" height="57.00" fill="#00bfff"/>
<rect x="698.5" y="322" width="1.50" height="8.50" fill="#00bfff"/>
<rect x="658.7" y="304.2" width="6.80" height="2.90" fill="#00bfff"/>
<rect x="555.3" y="304.2" width="5.70" height="2.90" fill="#00bfff"/>
<path d="M591 337.5 H627.5 V350.6 H591 Z M591 339.5 H627.5 M610 339.5 V350.6" stroke="#00bfff" stroke-width="1.4" fill="none" />
<rect x="591" y="350.6" width="2.6" height="7.4" fill="#ffff00"/>
<rect x="625.9" y="350.6" width="2.6" height="7.4" fill="#ffff00"/>
<line x1="592" y1="336.5" x2="627" y2="336.5" stroke="#ffff00" stroke-width="1.2" />
<rect x="587.5" y="297.5" width="2.5" height="13.7" fill="none" stroke="#ffff00" stroke-width="1"/>
<path d="M603.5 351 H619.9 Q624 352 625 358" stroke="#8a8080" stroke-width="0.8" fill="none" />
<line x1="661.5" y1="322" x2="661.5" y2="337" stroke="#ff0000" stroke-width="1" stroke-dasharray="5 2 1 2"/>
<line x1="507.2" y1="375" x2="507.2" y2="381" stroke="#ff0000" stroke-width="1" stroke-dasharray="5 2 1 2"/>
<line x1="568.5" y1="379" x2="568.5" y2="396" stroke="#ff0000" stroke-width="1" stroke-dasharray="5 2 1 2"/>
<line x1="612" y1="361" x2="612" y2="427" stroke="#ff0000" stroke-width="1" stroke-dasharray="5 2 1 2"/>
<line x1="562.5" y1="324" x2="562.5" y2="358" stroke="#ff0000" stroke-width="1" stroke-dasharray="5 2 1 2"/>
<line x1="506" y1="321.2" x2="523" y2="321.2" stroke="#ff0000" stroke-width="2" />
<line x1="593.75" y1="291.9" x2="626.25" y2="291.9" stroke="#ff0000" stroke-width="1.5" />
<line x1="565" y1="321.2" x2="593" y2="321.2" stroke="#ff0000" stroke-width="1" stroke-dasharray="6 2"/>
<line x1="630" y1="321.2" x2="656" y2="321.2" stroke="#ff0000" stroke-width="1" stroke-dasharray="6 2"/>
<line x1="537" y1="359.4" x2="555" y2="359.4" stroke="#ff0000" stroke-width="1.3" stroke-dasharray="8 2 1 2"/>
<line x1="510" y1="428.9" x2="565" y2="428.9" stroke="#ff0000" stroke-width="1.3" stroke-dasharray="14 3 1 3"/>
<line x1="660" y1="429" x2="712" y2="429" stroke="#ff0000" stroke-width="1.3" stroke-dasharray="14 3 1 3"/>
<line x1="665" y1="359.1" x2="690" y2="359.1" stroke="#ff0000" stroke-width="1.3" stroke-dasharray="8 2"/>
<line x1="427" y1="421.4" x2="503" y2="421.4" stroke="#ff0000" stroke-width="1" />
<line x1="575" y1="421.4" x2="655" y2="421.4" stroke="#ff0000" stroke-width="1" />
<rect x="436.9" y="320.8" width="7.7000000000000455" height="3.3999999999999773" fill="#ffff00"/>
<rect x="453.9" y="320.8" width="17.0" height="3.3999999999999773" fill="#ffff00"/>
<rect x="481" y="320.8" width="6.899999999999977" height="3.3999999999999773" fill="#ffff00"/>
<rect x="508" y="313" width="10.799999999999955" height="4" fill="#ffff00"/>
<rect x="531.4" y="319.3" width="21.899999999999977" height="2.8999999999999773" fill="#ffff00"/>
<rect x="595" y="272.5" width="11.899999999999977" height="4.5" fill="#ffff00"/>
<rect x="669.4" y="319.3" width="22.800000000000068" height="3.3999999999999773" fill="#ffff00"/>
<rect x="704.9" y="312.5" width="12.100000000000023" height="3.5" fill="#ffff00"/>
<rect x="435.6" y="427" width="24.399999999999977" height="4" fill="#ffff00"/>
<rect x="475.6" y="427" width="22.899999999999977" height="4" fill="#ffff00"/>
<rect x="579.4" y="427.2" width="21.700000000000045" height="3.900000000000034" fill="#ffff00"/>
<rect x="623.3" y="427.2" width="21.700000000000045" height="3.900000000000034" fill="#ffff00"/>
<rect x="591" y="277" width="2.7000000000000455" height="9" fill="#ffff00"/>
<rect x="427" y="420.2" width="76" height="1.6" fill="#ffff00"/>
<rect x="515.6" y="421" width="44.4" height="2.8" fill="#ffff00"/>
<line x1="520" y1="422.4" x2="556" y2="422.4" stroke="#b0b000" stroke-width="0.6" />
<rect x="575" y="420" width="80" height="1.6" fill="#ffff00"/>
<rect x="663" y="421.5" width="47" height="2.1" fill="#ffff00"/>
<rect x="566" y="291" width="21" height="24.6" fill="none" stroke="#ffff00" stroke-width="1.4"/>
<path d="M566 291 L587 315.6 M587 291 L566 315.6" stroke="#ffff00" stroke-width="1.1" fill="none" />
<rect x="632" y="298.75" width="21" height="18.75" fill="none" stroke="#ffff00" stroke-width="1.4"/>
<path d="M632 298.75 L653 317.5 M653 298.75 L632 317.5" stroke="#ffff00" stroke-width="1.1" fill="none" />
<rect x="636.5" y="293.8" width="13" height="2.6" fill="none" stroke="#ffff00" stroke-width="1.1"/>
<rect x="593.75" y="291.9" width="32.5" height="28.7" fill="none" stroke="#ffff00" stroke-width="1.2"/>
<line x1="593.75" y1="295.5" x2="626.25" y2="295.5" stroke="#ffff00" stroke-width="1.1" />
<line x1="593.75" y1="298.8" x2="626.25" y2="298.8" stroke="#ffff00" stroke-width="1.1" />
<line x1="593.75" y1="302.1" x2="626.25" y2="302.1" stroke="#ffff00" stroke-width="1.1" />
<line x1="593.75" y1="305.4" x2="626.25" y2="305.4" stroke="#ffff00" stroke-width="1.1" />
<line x1="593.75" y1="308.7" x2="626.25" y2="308.7" stroke="#ffff00" stroke-width="1.1" />
<line x1="593.75" y1="312.0" x2="626.25" y2="312.0" stroke="#ffff00" stroke-width="1.1" />
<line x1="593.75" y1="315.3" x2="626.25" y2="315.3" stroke="#ffff00" stroke-width="1.1" />
<line x1="593.75" y1="318.6" x2="626.25" y2="318.6" stroke="#ffff00" stroke-width="1.1" />
<rect x="608" y="292" width="4" height="28.6" fill="#ffff00"/>
<rect x="601" y="284" width="17" height="8" fill="none" stroke="#ffff00" stroke-width="1.2"/>
<path d="M612 305 L622 300 M614 310 L624 306" stroke="#ffff00" stroke-width="0.8" fill="none" />
<path d="M592.4 323.2 Q606 326 606.5 336.5" stroke="#ffff00" stroke-width="1.3" fill="none" />
<path d="M626.7 323.2 Q614 326 613.4 336.5" stroke="#ffff00" stroke-width="1.3" fill="none" />
<path d="M571.75 345.5 Q584 346 585.5 358" stroke="#ffff00" stroke-width="1.3" fill="none" />
<path d="M652.5 345.5 Q641 346 639.2 358" stroke="#ffff00" stroke-width="1.3" fill="none" />
<path d="M571.75 345.5 H574.3" stroke="#ffff00" stroke-width="1.3" fill="none" />
<path d="M652.5 345.5 H650" stroke="#ffff00" stroke-width="1.3" fill="none" />
<path d="M593.3 377.5 A11 11 0 0 0 604.4 388.3" stroke="#ffff00" stroke-width="1.3" fill="none" />
<path d="M631.7 377.5 A11 11 0 0 1 620.5 388.3" stroke="#ffff00" stroke-width="1.3" fill="none" />
<path d="M434.4 358.2 Q436 350.4 444.2 350.4" stroke="#ffff00" stroke-width="1.3" fill="none" />
<path d="M466 357.2 Q468 349 477.2 349" stroke="#ffff00" stroke-width="1.3" fill="none" />
<path d="M453.9 361.7 Q454 371.7 458.9 371.7" stroke="#ffff00" stroke-width="1.3" fill="none" />
<path d="M495 380.6 Q498 385 503.9 385" stroke="#ffff00" stroke-width="1.3" fill="none" />
<path d="M652.4 345.5 H648" stroke="#ffff00" stroke-width="1.3" fill="none" />
<path d="M716 348 A11 11 0 0 0 705 359" stroke="#ffff00" stroke-width="1.3" fill="none" />
<line x1="444.2" y1="350.4" x2="444.2" y2="359" stroke="#ffff00" stroke-width="1.4" />
<line x1="477.6" y1="349" x2="477.6" y2="359" stroke="#ffff00" stroke-width="1.4" />
<line x1="604.4" y1="377" x2="604.4" y2="388.3" stroke="#ffff00" stroke-width="1.4" />
<line x1="620.3" y1="377" x2="620.3" y2="388.3" stroke="#ffff00" stroke-width="1.4" />
<line x1="525" y1="330" x2="525" y2="350" stroke="#ffff00" stroke-width="1.4" />
<line x1="699.5" y1="330" x2="699.5" y2="350" stroke="#ffff00" stroke-width="1.4" />
<line x1="592.8" y1="339" x2="592.8" y2="350" stroke="#ffff00" stroke-width="1.4" />
<line x1="626.8" y1="339" x2="626.8" y2="350" stroke="#ffff00" stroke-width="1.4" />
<line x1="571.75" y1="345.5" x2="571.75" y2="358" stroke="#ffff00" stroke-width="1.4" />
<line x1="652.5" y1="345.5" x2="652.5" y2="358" stroke="#ffff00" stroke-width="1.4" />
<line x1="652.4" y1="345.5" x2="652.4" y2="359" stroke="#ffff00" stroke-width="1.4" />
<line x1="453.9" y1="361.7" x2="464.4" y2="361.7" stroke="#ffff00" stroke-width="1.4" />
<line x1="440.75" y1="315.9" x2="448.5" y2="315.9" stroke="#ff00ff" stroke-width="3.8" stroke-dasharray="1.8 0.6"/>
<line x1="455.8" y1="316.0" x2="463.6" y2="316.0" stroke="#ff00ff" stroke-width="4" stroke-dasharray="1.8 0.6"/>
<line x1="510" y1="308.15" x2="517.8" y2="308.15" stroke="#ff00ff" stroke-width="2.9" stroke-dasharray="1.8 0.6"/>
<line x1="483" y1="331.95" x2="489.8" y2="331.95" stroke="#ff00ff" stroke-width="2.9" stroke-dasharray="1.8 0.6"/>
<line x1="468" y1="356.95" x2="473.8" y2="356.95" stroke="#ff00ff" stroke-width="2.5" stroke-dasharray="1.8 0.6"/>
<line x1="435" y1="363.0" x2="439.8" y2="363.0" stroke="#ff00ff" stroke-width="3" stroke-dasharray="1.8 0.6"/>
<line x1="536.8" y1="325.59999999999997" x2="544.0" y2="325.59999999999997" stroke="#ff00ff" stroke-width="2.8" stroke-dasharray="1.8 0.6"/>
<rect x="528" y="341.2" width="3" height="4.3" fill="#ff00ff"/>
<line x1="531" y1="417.2" x2="538" y2="417.2" stroke="#ff00ff" stroke-width="3" stroke-dasharray="1.8 0.6"/>
<line x1="594.3" y1="372.8" x2="601.3" y2="372.8" stroke="#ff00ff" stroke-width="3" stroke-dasharray="1.8 0.6"/>
<line x1="622" y1="372.8" x2="628" y2="372.8" stroke="#ff00ff" stroke-width="3" stroke-dasharray="1.8 0.6"/>
<line x1="575" y1="363.3" x2="581" y2="363.3" stroke="#ff00ff" stroke-width="3" stroke-dasharray="1.8 0.6"/>
<line x1="638.8" y1="363.3" x2="646.8" y2="363.3" stroke="#ff00ff" stroke-width="3" stroke-dasharray="1.8 0.6"/>
<line x1="672.7" y1="326.5" x2="678.7" y2="326.5" stroke="#ff00ff" stroke-width="3" stroke-dasharray="1.8 0.6"/>
<rect x="695.1" y="341" width="3" height="6" fill="#ff00ff"/>
<line x1="702.8" y1="308.0" x2="709.8" y2="308.0" stroke="#ff00ff" stroke-width="4" stroke-dasharray="1.8 0.6"/>
<line x1="598.75" y1="280.0" x2="604.75" y2="280.0" stroke="#ff00ff" stroke-width="4" stroke-dasharray="1.8 0.6"/>
<rect x="588" y="325" width="2" height="6" fill="#ff00ff"/>
<rect x="630" y="325" width="2" height="6" fill="#ff00ff"/>
<line x1="441.9" y1="435.3" x2="448.79999999999995" y2="435.3" stroke="#ff00ff" stroke-width="3.1" stroke-dasharray="1.8 0.6"/>
<line x1="482.5" y1="435.3" x2="488.7" y2="435.3" stroke="#ff00ff" stroke-width="3.1" stroke-dasharray="1.8 0.6"/>
<line x1="585.5" y1="434.7" x2="591.5" y2="434.7" stroke="#ff00ff" stroke-width="3" stroke-dasharray="1.8 0.6"/>
<line x1="625.7" y1="434.7" x2="631.7" y2="434.7" stroke="#ff00ff" stroke-width="3" stroke-dasharray="1.8 0.6"/>
<line x1="682.8" y1="417.5" x2="688.8" y2="417.5" stroke="#ff00ff" stroke-width="3" stroke-dasharray="1.8 0.6"/>
<path d="M591 342.5 L587 345.5 L591 348.5 M628 342.5 L632 345.5 L628 348.5" stroke="#ff00ff" stroke-width="1.4" fill="none" />
<circle cx="531.7" cy="377.8" r="4.3" stroke="#ff00ff" stroke-width="1.2" fill="none"/>
<circle cx="686.5" cy="377.8" r="4.3" stroke="#ff00ff" stroke-width="1.2" fill="none"/>
<line x1="531.7" y1="375.5" x2="531.7" y2="380" stroke="#ff00ff" stroke-width="1" />
<line x1="686.5" y1="375.5" x2="686.5" y2="380" stroke="#ff00ff" stroke-width="1" />
<path d="M530.4 386 H538.4 L534.4 390.5Z" stroke="#e07be0" stroke-width="1" fill="none" />
<line x1="531" y1="386" x2="545" y2="386" stroke="#e07be0" stroke-width="1.2" />
<path d="M520 334 H528 L524 338.5Z" stroke="#e07be0" stroke-width="1" fill="none" />
<line x1="522" y1="333.5" x2="544" y2="333.5" stroke="#e07be0" stroke-width="1.2" />
<path d="M531 427.2 H539 L535 422.7Z" stroke="#e07be0" stroke-width="1" fill="none" />
<line x1="531" y1="427.3" x2="547" y2="427.3" stroke="#e07be0" stroke-width="1.2" />
<path d="M531 442.8 H539 L535 438.3Z" stroke="#e07be0" stroke-width="1" fill="none" />
<path d="M517.4 448.7 H525.4 L521.4 444.2Z" stroke="#e07be0" stroke-width="1" fill="none" />
<line x1="518" y1="448.5" x2="530" y2="448.5" stroke="#e07be0" stroke-width="1.2" />
<path d="M687.2 303.2 H695.2 L691.2 307.7Z" stroke="#e07be0" stroke-width="1" fill="none" />
<line x1="678" y1="303.2" x2="700" y2="303.2" stroke="#e07be0" stroke-width="1.2" />
<path d="M684.3 315.8 H692.3 L688.3 320.3Z" stroke="#e07be0" stroke-width="1" fill="none" />
<line x1="677" y1="315.8" x2="692" y2="315.8" stroke="#e07be0" stroke-width="1.2" />
<path d="M696 332.4 H704 L700 336.9Z" stroke="#e07be0" stroke-width="1" fill="none" />
<line x1="681" y1="332.4" x2="704" y2="332.4" stroke="#e07be0" stroke-width="1.2" />
<path d="M699.9 351.4 H707.9 L703.9 346.9Z" stroke="#e07be0" stroke-width="1" fill="none" />
<line x1="688" y1="351" x2="720" y2="351" stroke="#e07be0" stroke-width="1.2" />
<path d="M685.3 385.5 H693.3 L689.3 390.0Z" stroke="#e07be0" stroke-width="1" fill="none" />
<line x1="680" y1="385.5" x2="695" y2="385.5" stroke="#e07be0" stroke-width="1.2" />
<path d="M685.3 427.7 H693.3 L689.3 423.2Z" stroke="#e07be0" stroke-width="1" fill="none" />
<line x1="685" y1="427.8" x2="700" y2="427.8" stroke="#e07be0" stroke-width="1.2" />
<path d="M685.3 443.7 H693.3 L689.3 439.2Z" stroke="#e07be0" stroke-width="1" fill="none" />
<path d="M696.4 449.2 H704.4 L700.4 444.7Z" stroke="#e07be0" stroke-width="1" fill="none" />
<line x1="697" y1="449" x2="712" y2="449" stroke="#e07be0" stroke-width="1.2" />
<path d="M528.4 302.7 H536.4 L532.4 307.2Z" stroke="#e07be0" stroke-width="1" fill="none" />
<line x1="530" y1="302.6" x2="546" y2="302.6" stroke="#e07be0" stroke-width="1.2" />
<path d="M528 315.4 H536 L532 319.9Z" stroke="#e07be0" stroke-width="1" fill="none" />
<line x1="528" y1="315.4" x2="548" y2="315.4" stroke="#e07be0" stroke-width="1.2" />
<path d="M513.4 351 H521.4 L517.4 346.5Z" stroke="#e07be0" stroke-width="1" fill="none" />
<line x1="510" y1="351" x2="530" y2="351" stroke="#e07be0" stroke-width="1.2" />
<path d="M503.3 431.5 V444.7 H572.8 V431.5 M509.6 431 V439 M566 431 V439" stroke="#ff9090" stroke-width="1" fill="none" />
<rect x="514" y="439.4" width="48" height="1.8" fill="#ff0000"/>
<rect x="505" y="437" width="9" height="5" fill="#8a8080"/>
<rect x="562" y="437" width="5" height="5" fill="#8a8080"/>
<path d="M660 431.5 V444.5 H718 M665 431 V439" stroke="#ff9090" stroke-width="1" fill="none" />
<rect x="668" y="438.5" width="50" height="1.8" fill="#ff0000"/>
<rect x="660" y="437" width="8" height="5" fill="#8a8080"/>
<line x1="575" y1="432.2" x2="655" y2="432.2" stroke="#ff9090" stroke-width="1" />
<path d="M523.2 304.2 H555.3 M523.2 307.1 H555.3 M523.2 304.2 V313" stroke="#ff9090" stroke-width="1" fill="none" />
<path d="M659.2 304.2 H701 M698 304.2 V313" stroke="#ff9090" stroke-width="1" fill="none" />
<line x1="530" y1="306.5" x2="553" y2="306.5" stroke="#ff0000" stroke-width="1.4" />
<line x1="665" y1="306.5" x2="700" y2="306.5" stroke="#ff0000" stroke-width="1.4" />
<line x1="699" y1="290" x2="699" y2="313" stroke="#ff0000" stroke-width="1.3" />
<path d="M457.3 311.5 H476.2 M464 344.6 H472.8 L477.2 326.1 M472.8 344.6 L490.3 359.1 M455 372.2 L472.8 358.3 M457.2 372 L470.6 366.1 M447.2 372.2 H464.4" stroke="#7b8cff" stroke-width="1" fill="none" />
<path d="M440.7 427 V407.2 H458.75 V427 M478.2 427 V407 H494.9 V427 M574 427 V395.6 H590.6 V427 M635.6 427 V395.6 H655" stroke="#7b8cff" stroke-width="1" fill="none" />
<path d="M436 431 V445.25 H452.75 V431" stroke="#7b8cff" stroke-width="1.1" fill="none" />
<path d="M478 431 V445.25 H493.75 V431" stroke="#7b8cff" stroke-width="1.1" fill="none" />
<path d="M585 431 V443 H603 V431" stroke="#7b8cff" stroke-width="1.1" fill="none" />
<path d="M625 431 V443 H641 V431" stroke="#7b8cff" stroke-width="1.1" fill="none" />
<path d="M659.7 301.3 L665.5 299.4 M660 318 L665 311 M703.4 329.5 H712 L720 322 M554.3 299.4 L559.6 302.3 M553.3 312 Q558 313 559.1 318.3 M504.7 320.3 L513.5 328.5 H521.2" stroke="#7b8cff" stroke-width="1" fill="none" />
<path d="M591.1 414.4 L606.1 416.7 M551.7 414.4 L563.9 420 M633 414.4 L618 416.7 M668 414 L657 420" stroke="#7b8cff" stroke-width="1" fill="none" />
<path d="M435.9 314 L441.2 319.8 M483 323.2 Q486.4 325 486.4 328.5 M503.7 312 L507.6 309.1" stroke="#ff8c1a" stroke-width="1.3" fill="none" />
<path d="M476.2 330 Q478 335 476.2 340" stroke="#ff8c1a" stroke-width="1.2" fill="none" stroke-dasharray="1.5 1"/>
<rect x="487" y="314.4" width="10.5" height="5" fill="none" stroke="#ff8c1a" stroke-width="1.2"/>
<rect x="429.4" y="418.3" width="10.6" height="2.2" fill="#ff8c1a"/>
<rect x="596.1" y="416.5" width="9.5" height="2.5" fill="#ff8c1a"/>
<rect x="618.3" y="416.5" width="10" height="2.5" fill="#ff8c1a"/>
<rect x="480" y="418.3" width="10" height="2.2" fill="#ff8c1a"/>
<rect x="660.8" y="413.2" width="5" height="6" fill="#ff8c1a"/>
<line x1="436.7" y1="424.1" x2="447.2" y2="424.1" stroke="#ff8c1a" stroke-width="3" stroke-dasharray="2 1"/>
<line x1="482.8" y1="424.1" x2="492.8" y2="424.1" stroke="#ff8c1a" stroke-width="3" stroke-dasharray="2 1"/>
<line x1="575" y1="424.15" x2="584.4" y2="424.15" stroke="#ff8c1a" stroke-width="3.5" stroke-dasharray="2 1"/>
<line x1="592.2" y1="424.15" x2="608.2" y2="424.15" stroke="#ff8c1a" stroke-width="3.5" stroke-dasharray="2 1"/>
<line x1="617.2" y1="424.15" x2="630.6" y2="424.15" stroke="#ff8c1a" stroke-width="3.5" stroke-dasharray="2 1"/>
<line x1="638.3" y1="424.15" x2="648.9" y2="424.15" stroke="#ff8c1a" stroke-width="3.5" stroke-dasharray="2 1"/>
<path d="M505 350.4 H536.8 M526 359.4 H537 M591.7 367.8 H626.7 M591.7 359 V372 M626.7 359 V372 M604 384.4 H620 M606.7 413 V421 M617.2 413 V421 M688 350.9 H720 M705 373.5 H718" stroke="#4f9f4f" stroke-width="1" fill="none" />
<path d="M505 359.4 H526 M690 359.1 H697" stroke="#4f9f4f" stroke-width="1" fill="none" />
<line x1="514.4" y1="359" x2="514.4" y2="375.6" stroke="#00ff00" stroke-width="1.2" />
<line x1="510" y1="373.3" x2="519" y2="373.3" stroke="#00ff00" stroke-width="1" />
<line x1="510" y1="375.6" x2="519" y2="375.6" stroke="#00ff00" stroke-width="1" />
<line x1="558.3" y1="359" x2="558.3" y2="376.7" stroke="#00ff00" stroke-width="1.2" />
<line x1="553.9" y1="376.7" x2="567.2" y2="376.7" stroke="#00ff00" stroke-width="2.4" />
<line x1="465" y1="377" x2="465" y2="385" stroke="#00ff00" stroke-width="2" />
<line x1="671.3" y1="307" x2="671.3" y2="319" stroke="#00ff00" stroke-width="1.3" />
<line x1="665.7" y1="359" x2="665.7" y2="376" stroke="#00ff00" stroke-width="1.2" />
<line x1="658" y1="377" x2="670" y2="377" stroke="#00ff00" stroke-width="2.4" />
<line x1="709.4" y1="359" x2="709.4" y2="375" stroke="#00ff00" stroke-width="1.2" />
<line x1="705" y1="376" x2="718" y2="376" stroke="#00ff00" stroke-width="1.2" />
<line x1="525.2" y1="430" x2="525.2" y2="439" stroke="#00ff00" stroke-width="1.3" />
<path d="M507.2 442 V452 M513.75 442 V452 M505 447.4 H515 M568.3 440 V458 M572.4 440 V458 M566 436.7 H575 M566 440.5 H575" stroke="#4f9f4f" stroke-width="1" fill="none" />
<path d="M428 337 H434 Q436 341 434 345 H428 M428 346 H432 V358 H428 M431 325 V333" stroke="#8a8080" stroke-width="1.2" fill="none" />
<path d="M444.2 325 V358 M505.5 323 V355 M511 323 V355 M712 325 V355 M716 325 V355 " stroke="#8a8080" stroke-width="1.3" fill="none" stroke-dasharray="2 1.5"/>
<path d="M486 336 Q482 340 486 344 H494 V336Z M493 345 V359 M488 348 H496 V356 H488Z M515 320 H524 V327 H515" stroke="#8a8080" stroke-width="1.2" fill="none" />
<rect x="471.4" y="358.2" width="2.4" height="4.3" fill="#8a8080"/>
<line x1="434.9" y1="312.5" x2="436.9" y2="312.5" stroke="#fff" stroke-width="3" stroke-dasharray="1.6 0.7"/>
<line x1="457.8" y1="308.3" x2="469.4" y2="308.3" stroke="#fff" stroke-width="2.4" stroke-dasharray="1.6 0.7"/>
<line x1="475.8" y1="315.2" x2="479.1" y2="315.2" stroke="#fff" stroke-width="4.4" stroke-dasharray="1.6 0.7"/>
<line x1="440.5" y1="338" x2="443.5" y2="338" stroke="#fff" stroke-width="2.5" stroke-dasharray="1.6 0.7"/>
<line x1="434.5" y1="344" x2="437.5" y2="344" stroke="#fff" stroke-width="3" stroke-dasharray="1.6 0.7"/>
<line x1="459.0" y1="344" x2="463.0" y2="344" stroke="#fff" stroke-width="2.5" stroke-dasharray="1.6 0.7"/>
<line x1="465.5" y1="343" x2="469.5" y2="343" stroke="#fff" stroke-width="3" stroke-dasharray="1.6 0.7"/>
<line x1="463.5" y1="331" x2="468.5" y2="331" stroke="#fff" stroke-width="2.5" stroke-dasharray="1.6 0.7"/>
<line x1="469.5" y1="333" x2="474.5" y2="333" stroke="#fff" stroke-width="2.5" stroke-dasharray="1.6 0.7"/>
<line x1="488.0" y1="328" x2="490.0" y2="328" stroke="#fff" stroke-width="2" stroke-dasharray="1.6 0.7"/>
<line x1="446.9" y1="369.4" x2="450.9" y2="369.4" stroke="#fff" stroke-width="3" stroke-dasharray="1.6 0.7"/>
<line x1="458.1" y1="378.3" x2="463.1" y2="378.3" stroke="#fff" stroke-width="3" stroke-dasharray="1.6 0.7"/>
<line x1="470.8" y1="378.3" x2="475.8" y2="378.3" stroke="#fff" stroke-width="3" stroke-dasharray="1.6 0.7"/>
<line x1="442.9" y1="396.7" x2="445.9" y2="396.7" stroke="#fff" stroke-width="3" stroke-dasharray="1.6 0.7"/>
<line x1="440.9" y1="403.9" x2="456.9" y2="403.9" stroke="#fff" stroke-width="2.5" stroke-dasharray="1.6 0.7"/>
<line x1="484.5" y1="397.2" x2="487.5" y2="397.2" stroke="#fff" stroke-width="3" stroke-dasharray="1.6 0.7"/>
<line x1="479.2" y1="403.9" x2="495.2" y2="403.9" stroke="#fff" stroke-width="2.5" stroke-dasharray="1.6 0.7"/>
<line x1="429.5" y1="416" x2="434.5" y2="416" stroke="#fff" stroke-width="3" stroke-dasharray="1.6 0.7"/>
<line x1="438.5" y1="414" x2="441.5" y2="414" stroke="#fff" stroke-width="3" stroke-dasharray="1.6 0.7"/>
<line x1="476.5" y1="414" x2="479.5" y2="414" stroke="#fff" stroke-width="3" stroke-dasharray="1.6 0.7"/>
<line x1="483.5" y1="416" x2="488.5" y2="416" stroke="#fff" stroke-width="3" stroke-dasharray="1.6 0.7"/>
<line x1="510.2" y1="365.6" x2="513.2" y2="365.6" stroke="#fff" stroke-width="6" stroke-dasharray="1.6 0.7"/>
<line x1="510.2" y1="378.9" x2="513.2" y2="378.9" stroke="#fff" stroke-width="4" stroke-dasharray="1.6 0.7"/>
<line x1="553.5" y1="367.8" x2="556.5" y2="367.8" stroke="#fff" stroke-width="7" stroke-dasharray="1.6 0.7"/>
<line x1="554.1" y1="381.7" x2="557.1" y2="381.7" stroke="#fff" stroke-width="5" stroke-dasharray="1.6 0.7"/>
<line x1="540.3" y1="385" x2="546.3" y2="385" stroke="#fff" stroke-width="2.5" stroke-dasharray="1.6 0.7"/>
<line x1="535.7" y1="401.1" x2="538.7" y2="401.1" stroke="#fff" stroke-width="3" stroke-dasharray="1.6 0.7"/>
<line x1="551.8" y1="411.1" x2="554.8" y2="411.1" stroke="#fff" stroke-width="3" stroke-dasharray="1.6 0.7"/>
<line x1="558.1" y1="411.1" x2="563.1" y2="411.1" stroke="#fff" stroke-width="3" stroke-dasharray="1.6 0.7"/>
<line x1="536.2" y1="429.7" x2="546.2" y2="429.7" stroke="#fff" stroke-width="2.5" stroke-dasharray="1.6 0.7"/>
<line x1="533.0" y1="436.7" x2="539.0" y2="436.7" stroke="#fff" stroke-width="2" stroke-dasharray="1.6 0.7"/>
<line x1="536.6" y1="445.3" x2="550.6" y2="445.3" stroke="#fff" stroke-width="2.5" stroke-dasharray="1.6 0.7"/>
<line x1="539.0" y1="449.5" x2="551.0" y2="449.5" stroke="#fff" stroke-width="2.5" stroke-dasharray="1.6 0.7"/>
<line x1="521.8" y1="449.9" x2="532.8" y2="449.9" stroke="#fff" stroke-width="2.5" stroke-dasharray="1.6 0.7"/>
<line x1="506.9" y1="443.3" x2="512.9" y2="443.3" stroke="#fff" stroke-width="2.5" stroke-dasharray="1.6 0.7"/>
<line x1="559.0" y1="433.5" x2="565.0" y2="433.5" stroke="#fff" stroke-width="2.5" stroke-dasharray="1.6 0.7"/>
<line x1="561.6" y1="450.9" x2="566.6" y2="450.9" stroke="#fff" stroke-width="2.5" stroke-dasharray="1.6 0.7"/>
<line x1="498.7" y1="434.6" x2="501.7" y2="434.6" stroke="#fff" stroke-width="4" stroke-dasharray="1.6 0.7"/>
<line x1="498.7" y1="442.2" x2="501.7" y2="442.2" stroke="#fff" stroke-width="5" stroke-dasharray="1.6 0.7"/>
<line x1="521.6" y1="434.6" x2="524.6" y2="434.6" stroke="#fff" stroke-width="3" stroke-dasharray="1.6 0.7"/>
<line x1="585.8" y1="363.9" x2="590.8" y2="363.9" stroke="#fff" stroke-width="3" stroke-dasharray="1.6 0.7"/>
<line x1="597.3" y1="363.9" x2="609.3" y2="363.9" stroke="#fff" stroke-width="3" stroke-dasharray="1.6 0.7"/>
<line x1="614.3" y1="363.9" x2="622.3" y2="363.9" stroke="#fff" stroke-width="3" stroke-dasharray="1.6 0.7"/>
<line x1="628.6" y1="363.9" x2="633.6" y2="363.9" stroke="#fff" stroke-width="3" stroke-dasharray="1.6 0.7"/>
<line x1="607.8" y1="381.1" x2="617.8" y2="381.1" stroke="#fff" stroke-width="3" stroke-dasharray="1.6 0.7"/>
<line x1="579.1" y1="370" x2="583.1" y2="370" stroke="#fff" stroke-width="3" stroke-dasharray="1.6 0.7"/>
<line x1="641.8" y1="370" x2="644.8" y2="370" stroke="#fff" stroke-width="3" stroke-dasharray="1.6 0.7"/>
<line x1="574.6" y1="392.2" x2="586.6" y2="392.2" stroke="#fff" stroke-width="2.5" stroke-dasharray="1.6 0.7"/>
<line x1="639.1" y1="392.2" x2="653.1" y2="392.2" stroke="#fff" stroke-width="2.5" stroke-dasharray="1.6 0.7"/>
<line x1="582.4" y1="401.1" x2="585.4" y2="401.1" stroke="#fff" stroke-width="3" stroke-dasharray="1.6 0.7"/>
<line x1="637.9" y1="401.1" x2="640.9" y2="401.1" stroke="#fff" stroke-width="3" stroke-dasharray="1.6 0.7"/>
<line x1="591.0" y1="414" x2="595.0" y2="414" stroke="#fff" stroke-width="3" stroke-dasharray="1.6 0.7"/>
<line x1="599.5" y1="413" x2="602.5" y2="413" stroke="#fff" stroke-width="3" stroke-dasharray="1.6 0.7"/>
<line x1="621.5" y1="413" x2="624.5" y2="413" stroke="#fff" stroke-width="3" stroke-dasharray="1.6 0.7"/>
<line x1="627.0" y1="414" x2="631.0" y2="414" stroke="#fff" stroke-width="3" stroke-dasharray="1.6 0.7"/>
<line x1="680.0" y1="297.4" x2="688.0" y2="297.4" stroke="#fff" stroke-width="2.5" stroke-dasharray="1.6 0.7"/>
<line x1="679.9" y1="301.3" x2="691.9" y2="301.3" stroke="#fff" stroke-width="2.5" stroke-dasharray="1.6 0.7"/>
<line x1="686.8" y1="310" x2="692.8" y2="310" stroke="#fff" stroke-width="2.5" stroke-dasharray="1.6 0.7"/>
<line x1="677.0" y1="314.9" x2="687.0" y2="314.9" stroke="#fff" stroke-width="2.5" stroke-dasharray="1.6 0.7"/>
<line x1="667.4" y1="312.5" x2="670.4" y2="312.5" stroke="#fff" stroke-width="3" stroke-dasharray="1.6 0.7"/>
<line x1="680.9" y1="331.4" x2="692.9" y2="331.4" stroke="#fff" stroke-width="2.5" stroke-dasharray="1.6 0.7"/>
<line x1="673.7" y1="342.6" x2="676.7" y2="342.6" stroke="#fff" stroke-width="2.5" stroke-dasharray="1.6 0.7"/>
<line x1="704.8" y1="338.7" x2="707.8" y2="338.7" stroke="#fff" stroke-width="2.5" stroke-dasharray="1.6 0.7"/>
<line x1="653.3" y1="348" x2="658.3" y2="348" stroke="#fff" stroke-width="2.5" stroke-dasharray="1.6 0.7"/>
<line x1="664.0" y1="348" x2="668.0" y2="348" stroke="#fff" stroke-width="2.5" stroke-dasharray="1.6 0.7"/>
<line x1="687.7" y1="353.3" x2="697.7" y2="353.3" stroke="#fff" stroke-width="3" stroke-dasharray="1.6 0.7"/>
<line x1="596.5" y1="281" x2="601.5" y2="281" stroke="#fff" stroke-width="3" stroke-dasharray="1.6 0.7"/>
<line x1="573.5" y1="280" x2="578.5" y2="280" stroke="#fff" stroke-width="3" stroke-dasharray="1.6 0.7"/>
<line x1="574.0" y1="297" x2="580.0" y2="297" stroke="#fff" stroke-width="2.5" stroke-dasharray="1.6 0.7"/>
<line x1="575.0" y1="301" x2="581.0" y2="301" stroke="#fff" stroke-width="2.5" stroke-dasharray="1.6 0.7"/>
<line x1="637.5" y1="304" x2="642.5" y2="304" stroke="#fff" stroke-width="2.5" stroke-dasharray="1.6 0.7"/>
<line x1="598.5" y1="343.8" x2="601.5" y2="343.8" stroke="#fff" stroke-width="2.5" stroke-dasharray="1.6 0.7"/>
<line x1="613.9" y1="343.8" x2="618.9" y2="343.8" stroke="#fff" stroke-width="2.5" stroke-dasharray="1.6 0.7"/>
<line x1="605.9" y1="355" x2="608.9" y2="355" stroke="#fff" stroke-width="2.5" stroke-dasharray="1.6 0.7"/>
<line x1="572.0" y1="330.9" x2="575.0" y2="330.9" stroke="#fff" stroke-width="2.5" stroke-dasharray="1.6 0.7"/>
<line x1="571.7" y1="334.3" x2="578.7" y2="334.3" stroke="#fff" stroke-width="2.5" stroke-dasharray="1.6 0.7"/>
<line x1="565.0" y1="349.4" x2="570.0" y2="349.4" stroke="#fff" stroke-width="3" stroke-dasharray="1.6 0.7"/>
<line x1="639.8" y1="331.3" x2="649.8" y2="331.3" stroke="#fff" stroke-width="2.5" stroke-dasharray="1.6 0.7"/>
<line x1="636.8" y1="343.8" x2="639.8" y2="343.8" stroke="#fff" stroke-width="6" stroke-dasharray="1.6 0.7"/>
<line x1="636.4" y1="354" x2="639.4" y2="354" stroke="#fff" stroke-width="6" stroke-dasharray="1.6 0.7"/>
<line x1="653.0" y1="348.5" x2="657.0" y2="348.5" stroke="#fff" stroke-width="2.5" stroke-dasharray="1.6 0.7"/>
<line x1="615.0" y1="314" x2="619.0" y2="314" stroke="#fff" stroke-width="2" stroke-dasharray="1.6 0.7"/>
<line x1="537.0" y1="302" x2="543.0" y2="302" stroke="#fff" stroke-width="2.5" stroke-dasharray="1.6 0.7"/>
<line x1="533.0" y1="296" x2="541.0" y2="296" stroke="#fff" stroke-width="2.5" stroke-dasharray="1.6 0.7"/>
<line x1="515.0" y1="327" x2="525.0" y2="327" stroke="#fff" stroke-width="2.5" stroke-dasharray="1.6 0.7"/>
<line x1="512.0" y1="330" x2="518.0" y2="330" stroke="#fff" stroke-width="2.5" stroke-dasharray="1.6 0.7"/>
<line x1="547.0" y1="335" x2="553.0" y2="335" stroke="#fff" stroke-width="2.5" stroke-dasharray="1.6 0.7"/>
<line x1="551.5" y1="322" x2="554.5" y2="322" stroke="#fff" stroke-width="3" stroke-dasharray="1.6 0.7"/>
<line x1="546.5" y1="318" x2="549.5" y2="318" stroke="#fff" stroke-width="4" stroke-dasharray="1.6 0.7"/>
<line x1="512.5" y1="339" x2="515.5" y2="339" stroke="#fff" stroke-width="3" stroke-dasharray="1.6 0.7"/>
<line x1="516.5" y1="349" x2="521.5" y2="349" stroke="#fff" stroke-width="3" stroke-dasharray="1.6 0.7"/>
<line x1="515.5" y1="353" x2="520.5" y2="353" stroke="#fff" stroke-width="3" stroke-dasharray="1.6 0.7"/>
<line x1="520.0" y1="358" x2="526.0" y2="358" stroke="#fff" stroke-width="2.5" stroke-dasharray="1.6 0.7"/>
<line x1="683.8" y1="389.5" x2="689.8" y2="389.5" stroke="#fff" stroke-width="2.5" stroke-dasharray="1.6 0.7"/>
<line x1="695.5" y1="402" x2="698.5" y2="402" stroke="#fff" stroke-width="3" stroke-dasharray="1.6 0.7"/>
<line x1="674.5" y1="408" x2="677.5" y2="408" stroke="#fff" stroke-width="3" stroke-dasharray="1.6 0.7"/>
<line x1="688.0" y1="429" x2="698.0" y2="429" stroke="#fff" stroke-width="2.5" stroke-dasharray="1.6 0.7"/>
<line x1="699.0" y1="433" x2="703.0" y2="433" stroke="#fff" stroke-width="2.5" stroke-dasharray="1.6 0.7"/>
<line x1="685.0" y1="442" x2="691.0" y2="442" stroke="#fff" stroke-width="2.5" stroke-dasharray="1.6 0.7"/>
<line x1="702.5" y1="446" x2="707.5" y2="446" stroke="#fff" stroke-width="2.5" stroke-dasharray="1.6 0.7"/>
<line x1="658.5" y1="438" x2="661.5" y2="438" stroke="#fff" stroke-width="3" stroke-dasharray="1.6 0.7"/>
<line x1="704.5" y1="420" x2="707.5" y2="420" stroke="#fff" stroke-width="3" stroke-dasharray="1.6 0.7"/>
<line x1="663.5" y1="413" x2="666.5" y2="413" stroke="#fff" stroke-width="3" stroke-dasharray="1.6 0.7"/>
<line x1="699.5" y1="352" x2="702.5" y2="352" stroke="#fff" stroke-width="3" stroke-dasharray="1.6 0.7"/>
<line x1="404.4" y1="278.1" x2="404.4" y2="284.1" stroke="#fff" stroke-width="3" stroke-dasharray="1.6 0.7"/>
<line x1="404.4" y1="286.9" x2="404.4" y2="291.9" stroke="#fff" stroke-width="3" stroke-dasharray="1.6 0.7"/>
<line x1="404.4" y1="299.8" x2="404.4" y2="305.8" stroke="#fff" stroke-width="3" stroke-dasharray="1.6 0.7"/>
<line x1="404.4" y1="315.3" x2="404.4" y2="320.3" stroke="#fff" stroke-width="3" stroke-dasharray="1.6 0.7"/>
<line x1="404.4" y1="322.5" x2="404.4" y2="327.5" stroke="#fff" stroke-width="3" stroke-dasharray="1.6 0.7"/>
<line x1="394.7" y1="343.5" x2="394.7" y2="351.5" stroke="#fff" stroke-width="3" stroke-dasharray="1.6 0.7"/>
<line x1="405" y1="337.8" x2="405" y2="343.8" stroke="#fff" stroke-width="3" stroke-dasharray="1.6 0.7"/>
<line x1="405" y1="386.5" x2="405" y2="393.5" stroke="#fff" stroke-width="3" stroke-dasharray="1.6 0.7"/>
<line x1="405" y1="422.5" x2="405" y2="427.5" stroke="#fff" stroke-width="3" stroke-dasharray="1.6 0.7"/>
<line x1="405" y1="431.7" x2="405" y2="436.7" stroke="#fff" stroke-width="3" stroke-dasharray="1.6 0.7"/>
<line x1="394.7" y1="427.8" x2="394.7" y2="433.8" stroke="#fff" stroke-width="3" stroke-dasharray="1.6 0.7"/>
<path d="M632.3 337.3 H645.6 M641.3 337 V358 M637 339.5 H647 M564.9 352.4 H570.9 M652 352.4 H666" stroke="#4f9f4f" stroke-width="1" fill="none" />
<line x1="591.5" y1="322" x2="591.5" y2="336" stroke="#ff0000" stroke-width="1.2" stroke-dasharray="4 2"/>
<line x1="627.2" y1="322" x2="627.2" y2="336" stroke="#ff0000" stroke-width="1.2" stroke-dasharray="4 2"/>
<line x1="633.6" y1="331.3" x2="633.6" y2="337.3" stroke="#fff" stroke-width="2.5" stroke-dasharray="1.6 0.7"/>
<line x1="440.0" y1="442.6" x2="452.0" y2="442.6" stroke="#fff" stroke-width="2.5" stroke-dasharray="1.6 0.7"/>
<line x1="479.3" y1="442.6" x2="491.3" y2="442.6" stroke="#fff" stroke-width="2.5" stroke-dasharray="1.6 0.7"/>
<line x1="588.0" y1="441" x2="600.0" y2="441" stroke="#fff" stroke-width="2.5" stroke-dasharray="1.6 0.7"/>
<line x1="627.0" y1="441" x2="639.0" y2="441" stroke="#fff" stroke-width="2.5" stroke-dasharray="1.6 0.7"/>
<line x1="652.0" y1="449" x2="662.0" y2="449" stroke="#fff" stroke-width="2.5" stroke-dasharray="1.6 0.7"/>
<line x1="695.0" y1="445" x2="705.0" y2="445" stroke="#fff" stroke-width="2.5" stroke-dasharray="1.6 0.7"/>
<line x1="637.5" y1="450" x2="642.5" y2="450" stroke="#fff" stroke-width="2.5" stroke-dasharray="1.6 0.7"/>
<path d="M645 431 V452 H665 M575 441 V453 H585" stroke="#7b8cff" stroke-width="1" fill="none" />
<line x1="537.6" y1="287.8" x2="543.6" y2="287.8" stroke="#fff" stroke-width="2.5" stroke-dasharray="1.6 0.7"/>
<line x1="556.0" y1="287.8" x2="559.0" y2="287.8" stroke="#fff" stroke-width="2.5" stroke-dasharray="1.6 0.7"/>
<line x1="659.5" y1="288" x2="665.5" y2="288" stroke="#fff" stroke-width="2.5" stroke-dasharray="1.6 0.7"/>
<line x1="678.0" y1="288" x2="687.0" y2="288" stroke="#fff" stroke-width="2.5" stroke-dasharray="1.6 0.7"/>
<line x1="664.1" y1="297.5" x2="667.1" y2="297.5" stroke="#fff" stroke-width="2.5" stroke-dasharray="1.6 0.7"/>
<line x1="431.5" y1="222.5" x2="438.5" y2="222.5" stroke="#fff" stroke-width="3" stroke-dasharray="1.6 0.7"/>
<line x1="458.5" y1="222.5" x2="466.5" y2="222.5" stroke="#fff" stroke-width="3" stroke-dasharray="1.6 0.7"/>
<line x1="487.1" y1="222.5" x2="494.1" y2="222.5" stroke="#fff" stroke-width="3" stroke-dasharray="1.6 0.7"/>
<line x1="509.5" y1="222.5" x2="517.5" y2="222.5" stroke="#fff" stroke-width="3" stroke-dasharray="1.6 0.7"/>
<line x1="539.5" y1="222.5" x2="547.5" y2="222.5" stroke="#fff" stroke-width="3" stroke-dasharray="1.6 0.7"/>
<line x1="573.5" y1="222.5" x2="581.5" y2="222.5" stroke="#fff" stroke-width="3" stroke-dasharray="1.6 0.7"/>
<line x1="605.4" y1="222.5" x2="613.4" y2="222.5" stroke="#fff" stroke-width="3" stroke-dasharray="1.6 0.7"/>
<line x1="638.5" y1="222.5" x2="646.5" y2="222.5" stroke="#fff" stroke-width="3" stroke-dasharray="1.6 0.7"/>
<line x1="656.9" y1="222.5" x2="661.9" y2="222.5" stroke="#fff" stroke-width="3" stroke-dasharray="1.6 0.7"/>
<line x1="676.6" y1="222.5" x2="684.6" y2="222.5" stroke="#fff" stroke-width="3" stroke-dasharray="1.6 0.7"/>
<line x1="707.5" y1="222.5" x2="714.5" y2="222.5" stroke="#fff" stroke-width="3" stroke-dasharray="1.6 0.7"/>
<line x1="427.1" y1="233" x2="434.1" y2="233" stroke="#fff" stroke-width="3" stroke-dasharray="1.6 0.7"/>
<line x1="438.1" y1="233" x2="443.1" y2="233" stroke="#fff" stroke-width="3" stroke-dasharray="1.6 0.7"/>
<line x1="447.8" y1="233" x2="451.8" y2="233" stroke="#fff" stroke-width="3" stroke-dasharray="1.6 0.7"/>
<line x1="460.5" y1="233" x2="465.5" y2="233" stroke="#fff" stroke-width="3" stroke-dasharray="1.6 0.7"/>
<line x1="473.1" y1="233" x2="478.1" y2="233" stroke="#fff" stroke-width="3" stroke-dasharray="1.6 0.7"/>
<line x1="482.1" y1="233" x2="487.1" y2="233" stroke="#fff" stroke-width="3" stroke-dasharray="1.6 0.7"/>
<line x1="491.5" y1="233" x2="498.5" y2="233" stroke="#fff" stroke-width="3" stroke-dasharray="1.6 0.7"/>
<line x1="502.5" y1="233" x2="507.5" y2="233" stroke="#fff" stroke-width="3" stroke-dasharray="1.6 0.7"/>
<line x1="511.0" y1="233" x2="516.0" y2="233" stroke="#fff" stroke-width="3" stroke-dasharray="1.6 0.7"/>
<line x1="525.0" y1="233" x2="531.0" y2="233" stroke="#fff" stroke-width="3" stroke-dasharray="1.6 0.7"/>
<line x1="539.5" y1="233" x2="545.5" y2="233" stroke="#fff" stroke-width="3" stroke-dasharray="1.6 0.7"/>
<line x1="556.2" y1="233" x2="561.2" y2="233" stroke="#fff" stroke-width="3" stroke-dasharray="1.6 0.7"/>
<line x1="564.0" y1="233" x2="568.0" y2="233" stroke="#fff" stroke-width="3" stroke-dasharray="1.6 0.7"/>
<line x1="577.6" y1="233" x2="583.6" y2="233" stroke="#fff" stroke-width="3" stroke-dasharray="1.6 0.7"/>
<line x1="591.0" y1="233" x2="596.0" y2="233" stroke="#fff" stroke-width="3" stroke-dasharray="1.6 0.7"/>
<line x1="598.1" y1="233" x2="603.1" y2="233" stroke="#fff" stroke-width="3" stroke-dasharray="1.6 0.7"/>
<line x1="614.5" y1="233" x2="620.5" y2="233" stroke="#fff" stroke-width="3" stroke-dasharray="1.6 0.7"/>
<line x1="639.5" y1="233" x2="645.5" y2="233" stroke="#fff" stroke-width="3" stroke-dasharray="1.6 0.7"/>
<line x1="663.1" y1="233" x2="668.1" y2="233" stroke="#fff" stroke-width="3" stroke-dasharray="1.6 0.7"/>
<line x1="677.6" y1="233" x2="683.6" y2="233" stroke="#fff" stroke-width="3" stroke-dasharray="1.6 0.7"/>
<line x1="693.1" y1="233" x2="698.1" y2="233" stroke="#fff" stroke-width="3" stroke-dasharray="1.6 0.7"/>
<line x1="708.5" y1="233" x2="713.5" y2="233" stroke="#fff" stroke-width="3" stroke-dasharray="1.6 0.7"/>
<line x1="656.9" y1="228.5" x2="661.9" y2="228.5" stroke="#fff" stroke-width="3" stroke-dasharray="1.6 0.7"/>
<line x1="699.4" y1="228.5" x2="704.4" y2="228.5" stroke="#fff" stroke-width="3" stroke-dasharray="1.6 0.7"/>
<line x1="520.5" y1="228.75" x2="525.5" y2="228.75" stroke="#fff" stroke-width="3" stroke-dasharray="1.6 0.7"/>
<line x1="608.0" y1="212.5" x2="617.0" y2="212.5" stroke="#fff" stroke-width="3" stroke-dasharray="1.6 0.7"/>
<line x1="426.7" y1="478" x2="431.7" y2="478" stroke="#fff" stroke-width="3" stroke-dasharray="1.6 0.7"/>
<line x1="444.5" y1="478" x2="451.5" y2="478" stroke="#fff" stroke-width="3" stroke-dasharray="1.6 0.7"/>
<line x1="463.5" y1="478" x2="467.5" y2="478" stroke="#fff" stroke-width="3" stroke-dasharray="1.6 0.7"/>
<line x1="470.0" y1="478" x2="475.0" y2="478" stroke="#fff" stroke-width="3" stroke-dasharray="1.6 0.7"/>
<line x1="484.1" y1="478" x2="489.1" y2="478" stroke="#fff" stroke-width="3" stroke-dasharray="1.6 0.7"/>
<line x1="500.9" y1="478" x2="505.9" y2="478" stroke="#fff" stroke-width="3" stroke-dasharray="1.6 0.7"/>
<line x1="508.8" y1="478" x2="513.8" y2="478" stroke="#fff" stroke-width="3" stroke-dasharray="1.6 0.7"/>
<line x1="534.9" y1="478" x2="541.9" y2="478" stroke="#fff" stroke-width="3" stroke-dasharray="1.6 0.7"/>
<line x1="562.2" y1="478" x2="567.2" y2="478" stroke="#fff" stroke-width="3" stroke-dasharray="1.6 0.7"/>
<line x1="570.8" y1="478" x2="575.8" y2="478" stroke="#fff" stroke-width="3" stroke-dasharray="1.6 0.7"/>
<line x1="586.4" y1="478" x2="592.4" y2="478" stroke="#fff" stroke-width="3" stroke-dasharray="1.6 0.7"/>
<line x1="604.4" y1="478" x2="609.4" y2="478" stroke="#fff" stroke-width="3" stroke-dasharray="1.6 0.7"/>
<line x1="614.7" y1="478" x2="619.7" y2="478" stroke="#fff" stroke-width="3" stroke-dasharray="1.6 0.7"/>
<line x1="632.2" y1="478" x2="638.2" y2="478" stroke="#fff" stroke-width="3" stroke-dasharray="1.6 0.7"/>
<line x1="648.2" y1="478" x2="653.2" y2="478" stroke="#fff" stroke-width="3" stroke-dasharray="1.6 0.7"/>
<line x1="657.6" y1="478" x2="662.6" y2="478" stroke="#fff" stroke-width="3" stroke-dasharray="1.6 0.7"/>
<line x1="683.8" y1="478" x2="689.8" y2="478" stroke="#fff" stroke-width="3" stroke-dasharray="1.6 0.7"/>
<line x1="709.5" y1="478" x2="715.5" y2="478" stroke="#fff" stroke-width="3" stroke-dasharray="1.6 0.7"/>
<line x1="443.7" y1="488" x2="449.7" y2="488" stroke="#fff" stroke-width="3" stroke-dasharray="1.6 0.7"/>
<line x1="485.0" y1="488" x2="491.0" y2="488" stroke="#fff" stroke-width="3" stroke-dasharray="1.6 0.7"/>
<line x1="535.4" y1="488" x2="541.4" y2="488" stroke="#fff" stroke-width="3" stroke-dasharray="1.6 0.7"/>
<line x1="587.0" y1="488" x2="593.0" y2="488" stroke="#fff" stroke-width="3" stroke-dasharray="1.6 0.7"/>
<line x1="631.4" y1="488" x2="637.4" y2="488" stroke="#fff" stroke-width="3" stroke-dasharray="1.6 0.7"/>
<line x1="683.8" y1="488" x2="689.8" y2="488" stroke="#fff" stroke-width="3" stroke-dasharray="1.6 0.7"/>
<line x1="608.9" y1="498.1" x2="616.9" y2="498.1" stroke="#fff" stroke-width="3" stroke-dasharray="1.6 0.7"/>
<line x1="421.8" y1="201.3" x2="425.2" y2="201.3" stroke="#fff" stroke-width="3.5" stroke-dasharray="1.6 0.7"/>
<line x1="443.6" y1="201.3" x2="447.1" y2="201.3" stroke="#fff" stroke-width="3.5" stroke-dasharray="1.6 0.7"/>
<line x1="478.6" y1="201.3" x2="482.1" y2="201.3" stroke="#fff" stroke-width="3.5" stroke-dasharray="1.6 0.7"/>
<line x1="499.9" y1="201.3" x2="503.4" y2="201.3" stroke="#fff" stroke-width="3.5" stroke-dasharray="1.6 0.7"/>
<line x1="522.6" y1="201.3" x2="526.1" y2="201.3" stroke="#fff" stroke-width="3.5" stroke-dasharray="1.6 0.7"/>
<line x1="560.5" y1="201.3" x2="564.0" y2="201.3" stroke="#fff" stroke-width="3.5" stroke-dasharray="1.6 0.7"/>
<line x1="589.9" y1="201.3" x2="593.4" y2="201.3" stroke="#fff" stroke-width="3.5" stroke-dasharray="1.6 0.7"/>
<line x1="625.5" y1="201.3" x2="629.0" y2="201.3" stroke="#fff" stroke-width="3.5" stroke-dasharray="1.6 0.7"/>
<line x1="650.5" y1="201.3" x2="654.0" y2="201.3" stroke="#fff" stroke-width="3.5" stroke-dasharray="1.6 0.7"/>
<line x1="664.9" y1="201.3" x2="668.4" y2="201.3" stroke="#fff" stroke-width="3.5" stroke-dasharray="1.6 0.7"/>
<line x1="697.6" y1="201.3" x2="701.1" y2="201.3" stroke="#fff" stroke-width="3.5" stroke-dasharray="1.6 0.7"/>
<line x1="421.9" y1="517.3" x2="425.4" y2="517.3" stroke="#fff" stroke-width="3.5" stroke-dasharray="1.6 0.7"/>
<line x1="467.6" y1="517.3" x2="471.1" y2="517.3" stroke="#fff" stroke-width="3.5" stroke-dasharray="1.6 0.7"/>
<line x1="505.8" y1="517.3" x2="509.2" y2="517.3" stroke="#fff" stroke-width="3.5" stroke-dasharray="1.6 0.7"/>
<line x1="566.6" y1="517.3" x2="570.1" y2="517.3" stroke="#fff" stroke-width="3.5" stroke-dasharray="1.6 0.7"/>
<line x1="610.6" y1="517.3" x2="614.1" y2="517.3" stroke="#fff" stroke-width="3.5" stroke-dasharray="1.6 0.7"/>
<line x1="654.6" y1="517.3" x2="658.1" y2="517.3" stroke="#fff" stroke-width="3.5" stroke-dasharray="1.6 0.7"/>
<line x1="715.0" y1="517.3" x2="718.5" y2="517.3" stroke="#fff" stroke-width="3.5" stroke-dasharray="1.6 0.7"/>
<line x1="753.5" y1="517.3" x2="757.0" y2="517.3" stroke="#fff" stroke-width="3.5" stroke-dasharray="1.6 0.7"/>
<line x1="798.8" y1="517.3" x2="802.2" y2="517.3" stroke="#fff" stroke-width="3.5" stroke-dasharray="1.6 0.7"/>
<line x1="381.8" y1="269.4" x2="384.8" y2="269.4" stroke="#fff" stroke-width="3.5" stroke-dasharray="1.6 0.7"/>
<line x1="381.8" y1="281.4" x2="384.8" y2="281.4" stroke="#fff" stroke-width="3.5" stroke-dasharray="1.6 0.7"/>
<line x1="381.8" y1="296.4" x2="384.8" y2="296.4" stroke="#fff" stroke-width="3.5" stroke-dasharray="1.6 0.7"/>
<line x1="381.8" y1="309.4" x2="384.8" y2="309.4" stroke="#fff" stroke-width="3.5" stroke-dasharray="1.6 0.7"/>
<line x1="371.5" y1="316.1" x2="374.5" y2="316.1" stroke="#fff" stroke-width="3.5" stroke-dasharray="1.6 0.7"/>
<line x1="381.8" y1="327.8" x2="384.8" y2="327.8" stroke="#fff" stroke-width="3.5" stroke-dasharray="1.6 0.7"/>
<line x1="381.8" y1="359.5" x2="384.8" y2="359.5" stroke="#fff" stroke-width="3.5" stroke-dasharray="1.6 0.7"/>
<line x1="381.8" y1="421.3" x2="384.8" y2="421.3" stroke="#fff" stroke-width="3.5" stroke-dasharray="1.6 0.7"/>
<line x1="462.2" y1="300.6" x2="465.2" y2="300.6" stroke="#fff" stroke-width="3.5" stroke-dasharray="1.6 0.7"/>
<path d="M245.5 412.5 V141.6 H270" stroke="#ffffff" stroke-width="1" fill="none" />
<line x1="245.5" y1="412.7" x2="270" y2="412.7" stroke="#ffffff" stroke-width="1" />
<line x1="252.5" y1="141.6" x2="252.5" y2="331.5" stroke="#ffffff" stroke-width="1" />
<line x1="258.5" y1="141.6" x2="258.5" y2="331.5" stroke="#ffffff" stroke-width="1" />
<line x1="264.6" y1="141.6" x2="264.6" y2="331.5" stroke="#ffffff" stroke-width="1" />
<line x1="245.5" y1="173.2" x2="270" y2="173.2" stroke="#ffffff" stroke-width="1" />
<line x1="245.5" y1="204.4" x2="270" y2="204.4" stroke="#ffffff" stroke-width="1" />
<line x1="245.5" y1="236.6" x2="270" y2="236.6" stroke="#ffffff" stroke-width="1" />
<line x1="245.5" y1="268.2" x2="270" y2="268.2" stroke="#ffffff" stroke-width="1" />
<line x1="245.5" y1="300" x2="270" y2="300" stroke="#ffffff" stroke-width="1" />
<line x1="245.5" y1="331.5" x2="270" y2="331.5" stroke="#ffffff" stroke-width="1" />
<line x1="245.5" y1="388.6" x2="270" y2="388.6" stroke="#ffffff" stroke-width="1" />
<rect x="253" y="397" width="3" height="2" fill="#fff"/>
<rect x="253" y="404" width="4" height="2" fill="#fff"/>
<rect x="261" y="398" width="5" height="11" fill="#e8e8e8"/>
<rect x="272" y="580" width="27" height="68" fill="#ffffff"/>
<rect x="273" y="581" width="4" height="2" fill="#000"/>
<rect x="278" y="581" width="5" height="2" fill="#000"/>
<rect x="284" y="581" width="5" height="2" fill="#000"/>
<rect x="290" y="581" width="4" height="2" fill="#000"/>
<rect x="295" y="581" width="3" height="2" fill="#000"/>
<rect x="273" y="584" width="4" height="2" fill="#000"/>
<rect x="278" y="584" width="3" height="2" fill="#000"/>
<rect x="282" y="584" width="1" height="2" fill="#000"/>
<rect x="284" y="584" width="5" height="2" fill="#000"/>
<rect x="290" y="584" width="4" height="2" fill="#000"/>
<rect x="295" y="584" width="3" height="2" fill="#000"/>
<rect x="296" y="586" width="1" height="1" fill="#000"/>
<rect x="273" y="587" width="4" height="2" fill="#000"/>
<rect x="273" y="589" width="1" height="1" fill="#000"/>
<rect x="278" y="587" width="5" height="2" fill="#000"/>
<rect x="284" y="587" width="5" height="2" fill="#000"/>
<rect x="290" y="587" width="4" height="2" fill="#000"/>
<rect x="295" y="587" width="3" height="2" fill="#000"/>
<rect x="273" y="590" width="4" height="2" fill="#000"/>
<rect x="276" y="592" width="1" height="1" fill="#000"/>
<rect x="278" y="590" width="5" height="2" fill="#000"/>
<rect x="284" y="590" width="5" height="2" fill="#000"/>
<rect x="290" y="590" width="1" height="2" fill="#000"/>
<rect x="292" y="590" width="2" height="2" fill="#000"/>
<rect x="295" y="590" width="3" height="2" fill="#000"/>
<rect x="273" y="593" width="1" height="2" fill="#000"/>
<rect x="275" y="593" width="2" height="2" fill="#000"/>
<rect x="278" y="593" width="1" height="2" fill="#000"/>
<rect x="280" y="593" width="3" height="2" fill="#000"/>
<rect x="284" y="593" width="5" height="2" fill="#000"/>
<rect x="290" y="593" width="4" height="2" fill="#000"/>
<rect x="295" y="593" width="3" height="2" fill="#000"/>
<rect x="297" y="595" width="1" height="1" fill="#000"/>
<rect x="273" y="596" width="4" height="2" fill="#000"/>
<rect x="278" y="596" width="5" height="2" fill="#000"/>
<rect x="284" y="596" width="5" height="2" fill="#000"/>
<rect x="290" y="596" width="4" height="2" fill="#000"/>
<rect x="295" y="596" width="3" height="2" fill="#000"/>
<rect x="273" y="599" width="4" height="2" fill="#000"/>
<rect x="278" y="599" width="3" height="2" fill="#000"/>
<rect x="282" y="599" width="1" height="2" fill="#000"/>
<rect x="284" y="599" width="5" height="2" fill="#000"/>
<rect x="290" y="599" width="4" height="2" fill="#000"/>
<rect x="295" y="599" width="3" height="2" fill="#000"/>
<rect x="273" y="602" width="4" height="2" fill="#000"/>
<rect x="274" y="604" width="1" height="1" fill="#000"/>
<rect x="278" y="602" width="5" height="2" fill="#000"/>
<rect x="284" y="602" width="3" height="2" fill="#000"/>
<rect x="288" y="602" width="1" height="2" fill="#000"/>
<rect x="290" y="602" width="4" height="2" fill="#000"/>
<rect x="295" y="602" width="3" height="2" fill="#000"/>
<rect x="273" y="605" width="4" height="2" fill="#000"/>
<rect x="278" y="605" width="5" height="2" fill="#000"/>
<rect x="278" y="607" width="1" height="1" fill="#000"/>
<rect x="284" y="605" width="5" height="2" fill="#000"/>
<rect x="290" y="605" width="1" height="2" fill="#000"/>
<rect x="292" y="605" width="2" height="2" fill="#000"/>
<rect x="295" y="605" width="3" height="2" fill="#000"/>
<rect x="273" y="608" width="2" height="2" fill="#000"/>
<rect x="276" y="608" width="1" height="2" fill="#000"/>
<rect x="278" y="608" width="5" height="2" fill="#000"/>
<rect x="284" y="608" width="5" height="2" fill="#000"/>
<rect x="284" y="610" width="1" height="1" fill="#000"/>
<rect x="290" y="608" width="4" height="2" fill="#000"/>
<rect x="295" y="608" width="3" height="2" fill="#000"/>
<rect x="297" y="610" width="1" height="1" fill="#000"/>
<rect x="273" y="611" width="1" height="2" fill="#000"/>
<rect x="275" y="611" width="2" height="2" fill="#000"/>
<rect x="278" y="611" width="5" height="2" fill="#000"/>
<rect x="278" y="613" width="1" height="1" fill="#000"/>
<rect x="284" y="611" width="5" height="2" fill="#000"/>
<rect x="290" y="611" width="4" height="2" fill="#000"/>
<rect x="295" y="611" width="3" height="2" fill="#000"/>
<rect x="295" y="613" width="1" height="1" fill="#000"/>
<rect x="273" y="614" width="4" height="2" fill="#000"/>
<rect x="278" y="614" width="2" height="2" fill="#000"/>
<rect x="281" y="614" width="2" height="2" fill="#000"/>
<rect x="284" y="614" width="5" height="2" fill="#000"/>
<rect x="290" y="614" width="1" height="2" fill="#000"/>
<rect x="292" y="614" width="2" height="2" fill="#000"/>
<rect x="295" y="614" width="3" height="2" fill="#000"/>
<rect x="273" y="617" width="1" height="2" fill="#000"/>
<rect x="275" y="617" width="2" height="2" fill="#000"/>
<rect x="278" y="617" width="5" height="2" fill="#000"/>
<rect x="284" y="617" width="5" height="2" fill="#000"/>
<rect x="287" y="619" width="1" height="1" fill="#000"/>
<rect x="290" y="617" width="4" height="2" fill="#000"/>
<rect x="295" y="617" width="3" height="2" fill="#000"/>
<rect x="296" y="619" width="1" height="1" fill="#000"/>
<rect x="273" y="620" width="4" height="2" fill="#000"/>
<rect x="278" y="620" width="5" height="2" fill="#000"/>
<rect x="284" y="620" width="5" height="2" fill="#000"/>
<rect x="290" y="620" width="4" height="2" fill="#000"/>
<rect x="295" y="620" width="3" height="2" fill="#000"/>
<rect x="295" y="622" width="1" height="1" fill="#000"/>
<rect x="273" y="623" width="4" height="2" fill="#000"/>
<rect x="273" y="625" width="1" height="1" fill="#000"/>
<rect x="278" y="623" width="1" height="2" fill="#000"/>
<rect x="280" y="623" width="3" height="2" fill="#000"/>
<rect x="284" y="623" width="2" height="2" fill="#000"/>
<rect x="287" y="623" width="2" height="2" fill="#000"/>
<rect x="290" y="623" width="2" height="2" fill="#000"/>
<rect x="293" y="623" width="1" height="2" fill="#000"/>
<rect x="295" y="623" width="3" height="2" fill="#000"/>
<rect x="273" y="626" width="4" height="2" fill="#000"/>
<rect x="273" y="628" width="1" height="1" fill="#000"/>
<rect x="278" y="626" width="3" height="2" fill="#000"/>
<rect x="282" y="626" width="1" height="2" fill="#000"/>
<rect x="284" y="626" width="5" height="2" fill="#000"/>
<rect x="290" y="626" width="2" height="2" fill="#000"/>
<rect x="293" y="626" width="1" height="2" fill="#000"/>
<rect x="295" y="626" width="3" height="2" fill="#000"/>
<rect x="296" y="628" width="1" height="1" fill="#000"/>
<rect x="273" y="629" width="2" height="2" fill="#000"/>
<rect x="276" y="629" width="1" height="2" fill="#000"/>
<rect x="278" y="629" width="5" height="2" fill="#000"/>
<rect x="284" y="629" width="2" height="2" fill="#000"/>
<rect x="287" y="629" width="2" height="2" fill="#000"/>
<rect x="290" y="629" width="1" height="2" fill="#000"/>
<rect x="292" y="629" width="2" height="2" fill="#000"/>
<rect x="295" y="629" width="3" height="2" fill="#000"/>
<rect x="295" y="631" width="1" height="1" fill="#000"/>
<rect x="273" y="632" width="4" height="2" fill="#000"/>
<rect x="278" y="632" width="1" height="2" fill="#000"/>
<rect x="280" y="632" width="3" height="2" fill="#000"/>
<rect x="284" y="632" width="3" height="2" fill="#000"/>
<rect x="288" y="632" width="1" height="2" fill="#000"/>
<rect x="290" y="632" width="4" height="2" fill="#000"/>
<rect x="295" y="632" width="3" height="2" fill="#000"/>
<rect x="296" y="634" width="1" height="1" fill="#000"/>
<rect x="273" y="635" width="4" height="2" fill="#000"/>
<rect x="278" y="635" width="5" height="2" fill="#000"/>
<rect x="284" y="635" width="5" height="2" fill="#000"/>
<rect x="290" y="635" width="1" height="2" fill="#000"/>
<rect x="292" y="635" width="2" height="2" fill="#000"/>
<rect x="295" y="635" width="3" height="2" fill="#000"/>
<rect x="273" y="638" width="2" height="2" fill="#000"/>
<rect x="276" y="638" width="1" height="2" fill="#000"/>
<rect x="278" y="638" width="3" height="2" fill="#000"/>
<rect x="282" y="638" width="1" height="2" fill="#000"/>
<rect x="284" y="638" width="5" height="2" fill="#000"/>
<rect x="290" y="638" width="4" height="2" fill="#000"/>
<rect x="295" y="638" width="3" height="2" fill="#000"/>
<rect x="273" y="641" width="4" height="2" fill="#000"/>
<rect x="278" y="641" width="2" height="2" fill="#000"/>
<rect x="281" y="641" width="2" height="2" fill="#000"/>
<rect x="284" y="641" width="5" height="2" fill="#000"/>
<rect x="290" y="641" width="4" height="2" fill="#000"/>
<rect x="295" y="641" width="3" height="2" fill="#000"/>
<rect x="273" y="644" width="1" height="2" fill="#000"/>
<rect x="275" y="644" width="2" height="2" fill="#000"/>
<rect x="278" y="644" width="5" height="2" fill="#000"/>
<rect x="284" y="644" width="2" height="2" fill="#000"/>
<rect x="287" y="644" width="2" height="2" fill="#000"/>
<rect x="290" y="644" width="4" height="2" fill="#000"/>
<rect x="295" y="644" width="3" height="2" fill="#000"/>
<rect x="295" y="646" width="1" height="1" fill="#000"/>
<rect x="273" y="589" width="25" height="1" fill="#1a5a7a"/>
<path d="M653 598.8 H980 M653 598.8 V648" stroke="#ffffff" stroke-width="1.5" fill="none" />
<path d="M653 618 H782.3 M653 628.3 H782.3 M653 638.5 H782.3" stroke="#ffffff" stroke-width="1" fill="none" />
<path d="M672.3 618 V648 M692.5 618 V648 M717.4 618 V648 M737.3 618 V648 M757.4 618 V648" stroke="#ffffff" stroke-width="1" fill="none" />
<path d="M782.3 598.8 V648 M801.6 598.8 V628.5 M849.7 598.8 V608.4 M872 598.8 V608.4 M915.4 598.8 V648 M935.4 598.8 V648 M957.9 598.8 V648" stroke="#ffffff" stroke-width="1" fill="none" />
<path d="M782.3 608.4 H957.9 M782.3 618.8 H957.9 M782.3 628.5 H957.9 M915.4 638.4 H957.9" stroke="#ffffff" stroke-width="1" fill="none" />
<path d="M957.9 611 H980 M957.9 623.6 H980 M957.9 636.5 H980" stroke="#ffffff" stroke-width="1" fill="none" />
<line x1="654.0" y1="623.5" x2="657.0" y2="623.5" stroke="#fff" stroke-width="4" stroke-dasharray="1.6 0.7"/>
<line x1="660.0" y1="623.5" x2="662.5" y2="623.5" stroke="#fff" stroke-width="4" stroke-dasharray="1.6 0.7"/>
<line x1="654.0" y1="634.0" x2="657.0" y2="634.0" stroke="#fff" stroke-width="4" stroke-dasharray="1.6 0.7"/>
<line x1="660.0" y1="634.0" x2="662.5" y2="634.0" stroke="#fff" stroke-width="4" stroke-dasharray="1.6 0.7"/>
<line x1="654.0" y1="643.0" x2="662.0" y2="643.0" stroke="#fff" stroke-width="3" stroke-dasharray="1.6 0.7"/>
<line x1="720.0" y1="623.5" x2="723.0" y2="623.5" stroke="#fff" stroke-width="4" stroke-dasharray="1.6 0.7"/>
<line x1="727.0" y1="623.5" x2="729.0" y2="623.5" stroke="#fff" stroke-width="4" stroke-dasharray="1.6 0.7"/>
<line x1="720.0" y1="634.0" x2="723.0" y2="634.0" stroke="#fff" stroke-width="4" stroke-dasharray="1.6 0.7"/>
<line x1="727.0" y1="634.0" x2="729.0" y2="634.0" stroke="#fff" stroke-width="4" stroke-dasharray="1.6 0.7"/>
<line x1="720.0" y1="643.0" x2="728.0" y2="643.0" stroke="#fff" stroke-width="3" stroke-dasharray="1.6 0.7"/>
<line x1="784.0" y1="602.25" x2="795.0" y2="602.25" stroke="#fff" stroke-width="3.5" stroke-dasharray="1.6 0.7"/>
<line x1="784.0" y1="612.25" x2="795.0" y2="612.25" stroke="#fff" stroke-width="3.5" stroke-dasharray="1.6 0.7"/>
<line x1="784.0" y1="622.25" x2="795.0" y2="622.25" stroke="#fff" stroke-width="3.5" stroke-dasharray="1.6 0.7"/>
<line x1="852.0" y1="602.0" x2="862.0" y2="602.0" stroke="#fff" stroke-width="4" stroke-dasharray="1.6 0.7"/>
<line x1="853.0" y1="623.3" x2="861.0" y2="623.3" stroke="#fff" stroke-width="4" stroke-dasharray="1.6 0.7"/>
<line x1="829.0" y1="639.75" x2="848.0" y2="639.75" stroke="#fff" stroke-width="4.5" stroke-dasharray="1.6 0.7"/>
<line x1="917.0" y1="602.5" x2="920.0" y2="602.5" stroke="#fff" stroke-width="4" stroke-dasharray="1.6 0.7"/>
<line x1="921.0" y1="602.5" x2="923.0" y2="602.5" stroke="#fff" stroke-width="4" stroke-dasharray="1.6 0.7"/>
<line x1="926.0" y1="602.5" x2="928.0" y2="602.5" stroke="#fff" stroke-width="4" stroke-dasharray="1.6 0.7"/>
<line x1="917.0" y1="613.0" x2="920.0" y2="613.0" stroke="#fff" stroke-width="4" stroke-dasharray="1.6 0.7"/>
<line x1="926.0" y1="613.0" x2="929.0" y2="613.0" stroke="#fff" stroke-width="4" stroke-dasharray="1.6 0.7"/>
<line x1="917.0" y1="623.0" x2="920.0" y2="623.0" stroke="#fff" stroke-width="4" stroke-dasharray="1.6 0.7"/>
<line x1="926.0" y1="623.0" x2="929.0" y2="623.0" stroke="#fff" stroke-width="4" stroke-dasharray="1.6 0.7"/>
<line x1="917.0" y1="633.0" x2="920.0" y2="633.0" stroke="#fff" stroke-width="4" stroke-dasharray="1.6 0.7"/>
<line x1="926.0" y1="633.0" x2="929.0" y2="633.0" stroke="#fff" stroke-width="4" stroke-dasharray="1.6 0.7"/>
<line x1="917.0" y1="643.0" x2="920.0" y2="643.0" stroke="#fff" stroke-width="4" stroke-dasharray="1.6 0.7"/>
<line x1="926.0" y1="643.0" x2="929.0" y2="643.0" stroke="#fff" stroke-width="4" stroke-dasharray="1.6 0.7"/>
<line x1="940.0" y1="613.0" x2="946.0" y2="613.0" stroke="#fff" stroke-width="4" stroke-dasharray="1.6 0.7"/>
<line x1="940.0" y1="623.0" x2="946.0" y2="623.0" stroke="#fff" stroke-width="4" stroke-dasharray="1.6 0.7"/>
<line x1="942.0" y1="633.0" x2="946.0" y2="633.0" stroke="#fff" stroke-width="4" stroke-dasharray="1.6 0.7"/>
<line x1="963.0" y1="606.0" x2="971.0" y2="606.0" stroke="#fff" stroke-width="4" stroke-dasharray="1.6 0.7"/>
<line x1="963.0" y1="631.0" x2="971.0" y2="631.0" stroke="#fff" stroke-width="4" stroke-dasharray="1.6 0.7"/>
<line x1="623.0" y1="552.5" x2="641.0" y2="552.5" stroke="#fff" stroke-width="4.5" stroke-dasharray="1.6 0.7"/>
<line x1="651.0" y1="551.8" x2="658.0" y2="551.8" stroke="#fff" stroke-width="2.6" stroke-dasharray="1.6 0.7"/>
<line x1="618" y1="558.4" x2="645" y2="558.4" stroke="#00ff00" stroke-width="1.2" />
<line x1="602.0" y1="560.5" x2="624.0" y2="560.5" stroke="#fff" stroke-width="3" stroke-dasharray="1.6 0.7"/>
<!--/DWG-->
</svg>

<!-- STATUS -->
<svg class="a" style="left:0;top:690px" width="160" height="30" viewBox="0 690 160 30">
 <path d="M1 697 L8.5 716.5 Q9.5 718 11 718 H64 Q65.5 718 66.5 716.5 L73 697.5 H145.5 L138.5 716 Q137.5 717.5 136 717.5 H83 Q81.5 717.5 80.5 716 L74 697.5" stroke="#d8d8d8" stroke-width="1.2" fill="none"/>
</svg>
<div class="a" style="left:26px;top:701px;font-size:13px;line-height:16px;font-weight:500">模型</div>
<div class="a" style="left:93px;top:701px;font-size:13px;line-height:16px">布局1</div>
<div class="a" style="left:187px;top:699px;font-size:14px;line-height:18px;white-space:pre;letter-spacing:-0.1px">X : 673493 ,  Y : 716757</div>
<svg class="a" style="left:1240px;top:698px" width="38" height="20" viewBox="1240 698 38 20">
 <rect x="1241.5" y="700.5" width="15" height="15" rx="1" stroke="#4e4e4e" stroke-width="1" fill="none"/>
 <text x="1247.3" y="710.2" font-family="Liberation Sans" font-size="10.5" fill="#86c0e8" text-anchor="middle">A</text>
 <rect x="1253" y="700" width="1" height="16" fill="#86c0e8"/>
 <rect x="1242" y="712" width="14" height="1" fill="#86c0e8"/>
 <rect x="1262" y="701" width="14" height="1" fill="#86b9dc"/>
 <rect x="1262" y="705" width="14" height="2" fill="#8ec4ea"/>
 <rect x="1262" y="711" width="14" height="3" fill="#8ec4ea"/>
</svg>

<!-- DIALOG -->
<div id="dlg" class="a">
 <div class="a" style="left:11px;top:6px;font-size:14px;line-height:18px">图层</div>
 <svg class="a" style="left:500px;top:9px" width="11" height="11"><path d="M0.5 0.5 L10.5 10.5 M10.5 0.5 L0.5 10.5" stroke="#999" stroke-width="1"/></svg>
 <div class="btn" style="left:9px;width:62px">全部打开</div>
 <div class="btn" style="left:81px;width:62px">全部关闭</div>
 <div class="btn" style="left:153px;width:92px">显示所选图层</div>
 <div class="btn" style="left:255px;width:92px">关闭所选图层</div>
 <div class="btn" style="left:357px;width:92px">恢复初始状态</div>
 <div class="a" id="tbl" style="left:9px;top:66px;width:502px;height:246px;border:1px solid #d6d6d6;background:#f7f7f7;overflow:hidden">
<div class="a" style="left:0;top:0;width:482px;height:26px;border-bottom:1px solid #d8d8d8;background:#f7f7f7"></div>
<div class="a" style="left:6px;top:5px;font-size:14px;line-height:18px">开关</div>
<div class="a" style="left:45px;top:5px;font-size:14px;line-height:18px">颜色</div>
<div class="a" style="left:80px;top:5px;width:402px;text-align:center;font-size:14px;line-height:18px">名称</div>
<div class="row" style="top:26px"><svg class="a" style="left:10px;top:4px" width="20" height="18" viewBox="0 0 20 18"><g stroke="#a08c10" stroke-width="1.4" stroke-linecap="round"><path d="M10 1.6 V2.8 M3.8 3.8 L5 5 M16.2 3.8 L15 5 M1.8 9 H3.2 M16.8 9 H18.2 M3.8 13 L5 12 M16.2 13 L15 12"/></g><path d="M10 4.3 A4.8 4.8 0 0 1 12.8 12.9 V13.8 H7.2 V12.9 A4.8 4.8 0 0 1 10 4.3Z" fill="#f4d620" stroke="#c8a810" stroke-width="0.7"/><rect x="7.6" y="13.8" width="4.8" height="2.8" fill="#b09a30"/></svg><div class="sq" style="background:#fff"></div><div class="nm">$RECOVER_151103155645-84</div></div>
<div class="row" style="top:53px"><svg class="a" style="left:10px;top:4px" width="20" height="18" viewBox="0 0 20 18"><g stroke="#a08c10" stroke-width="1.4" stroke-linecap="round"><path d="M10 1.6 V2.8 M3.8 3.8 L5 5 M16.2 3.8 L15 5 M1.8 9 H3.2 M16.8 9 H18.2 M3.8 13 L5 12 M16.2 13 L15 12"/></g><path d="M10 4.3 A4.8 4.8 0 0 1 12.8 12.9 V13.8 H7.2 V12.9 A4.8 4.8 0 0 1 10 4.3Z" fill="#f4d620" stroke="#c8a810" stroke-width="0.7"/><rect x="7.6" y="13.8" width="4.8" height="2.8" fill="#b09a30"/></svg><div class="sq" style="background:#fff"></div><div class="nm">$RECOVER_151103155645-96</div></div>
<div class="row" style="top:80px"><svg class="a" style="left:10px;top:4px" width="20" height="18" viewBox="0 0 20 18"><g stroke="#a08c10" stroke-width="1.4" stroke-linecap="round"><path d="M10 1.6 V2.8 M3.8 3.8 L5 5 M16.2 3.8 L15 5 M1.8 9 H3.2 M16.8 9 H18.2 M3.8 13 L5 12 M16.2 13 L15 12"/></g><path d="M10 4.3 A4.8 4.8 0 0 1 12.8 12.9 V13.8 H7.2 V12.9 A4.8 4.8 0 0 1 10 4.3Z" fill="#f4d620" stroke="#c8a810" stroke-width="0.7"/><rect x="7.6" y="13.8" width="4.8" height="2.8" fill="#b09a30"/></svg><div class="sq" style="background:#fff"></div><div class="nm">0</div></div>
<div class="row" style="top:107px"><svg class="a" style="left:10px;top:4px" width="20" height="18" viewBox="0 0 20 18"><g stroke="#a08c10" stroke-width="1.4" stroke-linecap="round"><path d="M10 1.6 V2.8 M3.8 3.8 L5 5 M16.2 3.8 L15 5 M1.8 9 H3.2 M16.8 9 H18.2 M3.8 13 L5 12 M16.2 13 L15 12"/></g><path d="M10 4.3 A4.8 4.8 0 0 1 12.8 12.9 V13.8 H7.2 V12.9 A4.8 4.8 0 0 1 10 4.3Z" fill="#f4d620" stroke="#c8a810" stroke-width="0.7"/><rect x="7.6" y="13.8" width="4.8" height="2.8" fill="#b09a30"/></svg><div class="sq" style="background:#ff00ff"></div><div class="nm">0-修改标注</div></div>
<div class="row" style="top:134px"><svg class="a" style="left:10px;top:4px" width="20" height="18" viewBox="0 0 20 18"><g stroke="#a08c10" stroke-width="1.4" stroke-linecap="round"><path d="M10 1.6 V2.8 M3.8 3.8 L5 5 M16.2 3.8 L15 5 M1.8 9 H3.2 M16.8 9 H18.2 M3.8 13 L5 12 M16.2 13 L15 12"/></g><path d="M10 4.3 A4.8 4.8 0 0 1 12.8 12.9 V13.8 H7.2 V12.9 A4.8 4.8 0 0 1 10 4.3Z" fill="#f4d620" stroke="#c8a810" stroke-width="0.7"/><rect x="7.6" y="13.8" width="4.8" height="2.8" fill="#b09a30"/></svg><div class="sq" style="background:#ff00ff"></div><div class="nm">000-2016.02.23修改板上结构梁宽</div></div>
<div class="row" style="top:161px"><svg class="a" style="left:10px;top:4px" width="20" height="18" viewBox="0 0 20 18"><g stroke="#a08c10" stroke-width="1.4" stroke-linecap="round"><path d="M10 1.6 V2.8 M3.8 3.8 L5 5 M16.2 3.8 L15 5 M1.8 9 H3.2 M16.8 9 H18.2 M3.8 13 L5 12 M16.2 13 L15 12"/></g><path d="M10 4.3 A4.8 4.8 0 0 1 12.8 12.9 V13.8 H7.2 V12.9 A4.8 4.8 0 0 1 10 4.3Z" fill="#f4d620" stroke="#c8a810" stroke-width="0.7"/><rect x="7.6" y="13.8" width="4.8" height="2.8" fill="#b09a30"/></svg><div class="sq" style="background:#fff"></div><div class="nm">01</div></div>
<div class="row" style="top:188px"><svg class="a" style="left:10px;top:4px" width="20" height="18" viewBox="0 0 20 18"><g stroke="#a08c10" stroke-width="1.4" stroke-linecap="round"><path d="M10 1.6 V2.8 M3.8 3.8 L5 5 M16.2 3.8 L15 5 M1.8 9 H3.2 M16.8 9 H18.2 M3.8 13 L5 12 M16.2 13 L15 12"/></g><path d="M10 4.3 A4.8 4.8 0 0 1 12.8 12.9 V13.8 H7.2 V12.9 A4.8 4.8 0 0 1 10 4.3Z" fill="#f4d620" stroke="#c8a810" stroke-width="0.7"/><rect x="7.6" y="13.8" width="4.8" height="2.8" fill="#b09a30"/></svg><div class="sq" style="background:#fff"></div><div class="nm">02___PRT_ALL_AXES</div></div>
<div class="row" style="top:215px"><svg class="a" style="left:10px;top:4px" width="20" height="18" viewBox="0 0 20 18"><g stroke="#a08c10" stroke-width="1.4" stroke-linecap="round"><path d="M10 1.6 V2.8 M3.8 3.8 L5 5 M16.2 3.8 L15 5 M1.8 9 H3.2 M16.8 9 H18.2 M3.8 13 L5 12 M16.2 13 L15 12"/></g><path d="M10 4.3 A4.8 4.8 0 0 1 12.8 12.9 V13.8 H7.2 V12.9 A4.8 4.8 0 0 1 10 4.3Z" fill="#f4d620" stroke="#c8a810" stroke-width="0.7"/><rect x="7.6" y="13.8" width="4.8" height="2.8" fill="#b09a30"/></svg><div class="sq" style="background:#0000ff"></div><div class="nm">02c</div></div>
<div class="a" style="left:39px;top:0;width:1px;height:246px;background:#d8d8d8"></div>
<div class="a" style="left:79px;top:0;width:1px;height:246px;background:#d8d8d8"></div>
<div class="a" style="left:482px;top:0;width:1px;height:246px;background:#d8d8d8"></div>
<div class="a" style="left:483px;top:0;width:18px;height:244px;background:#f0f0f0"></div>
<svg class="a" style="left:486px;top:4px" width="12" height="9"><path d="M2 6.5 L6 2 L10 6.5" stroke="#505050" stroke-width="2.2" fill="none"/></svg>
<div class="a" style="left:485px;top:18px;width:15px;height:18px;background:#cdcdcd"></div>
<svg class="a" style="left:486px;top:231px" width="12" height="9"><path d="M2 2 L6 6.5 L10 2" stroke="#505050" stroke-width="2.2" fill="none"/></svg>
 </div>
 <svg class="a" style="left:505px;top:315px" width="13" height="13"><g fill="#ababab"><rect x="9" y="1" width="3" height="3"/><rect x="5" y="5" width="3" height="3"/><rect x="9" y="5" width="3" height="3"/><rect x="1" y="9" width="3" height="3"/><rect x="5" y="9" width="3" height="3"/><rect x="9" y="9" width="3" height="3"/></g></svg>
</div>

<!-- left / right borders -->
<div class="a" style="left:0;top:0;width:1px;height:720px;background:#8a8a8a"></div>
<div class="a" style="left:1279px;top:0;width:1px;height:720px;background:#8a8a8a"></div>
<div class="a" style="left:0;top:719px;width:1280px;height:1px;background:#8a8a8a"></div>
</body></html>
